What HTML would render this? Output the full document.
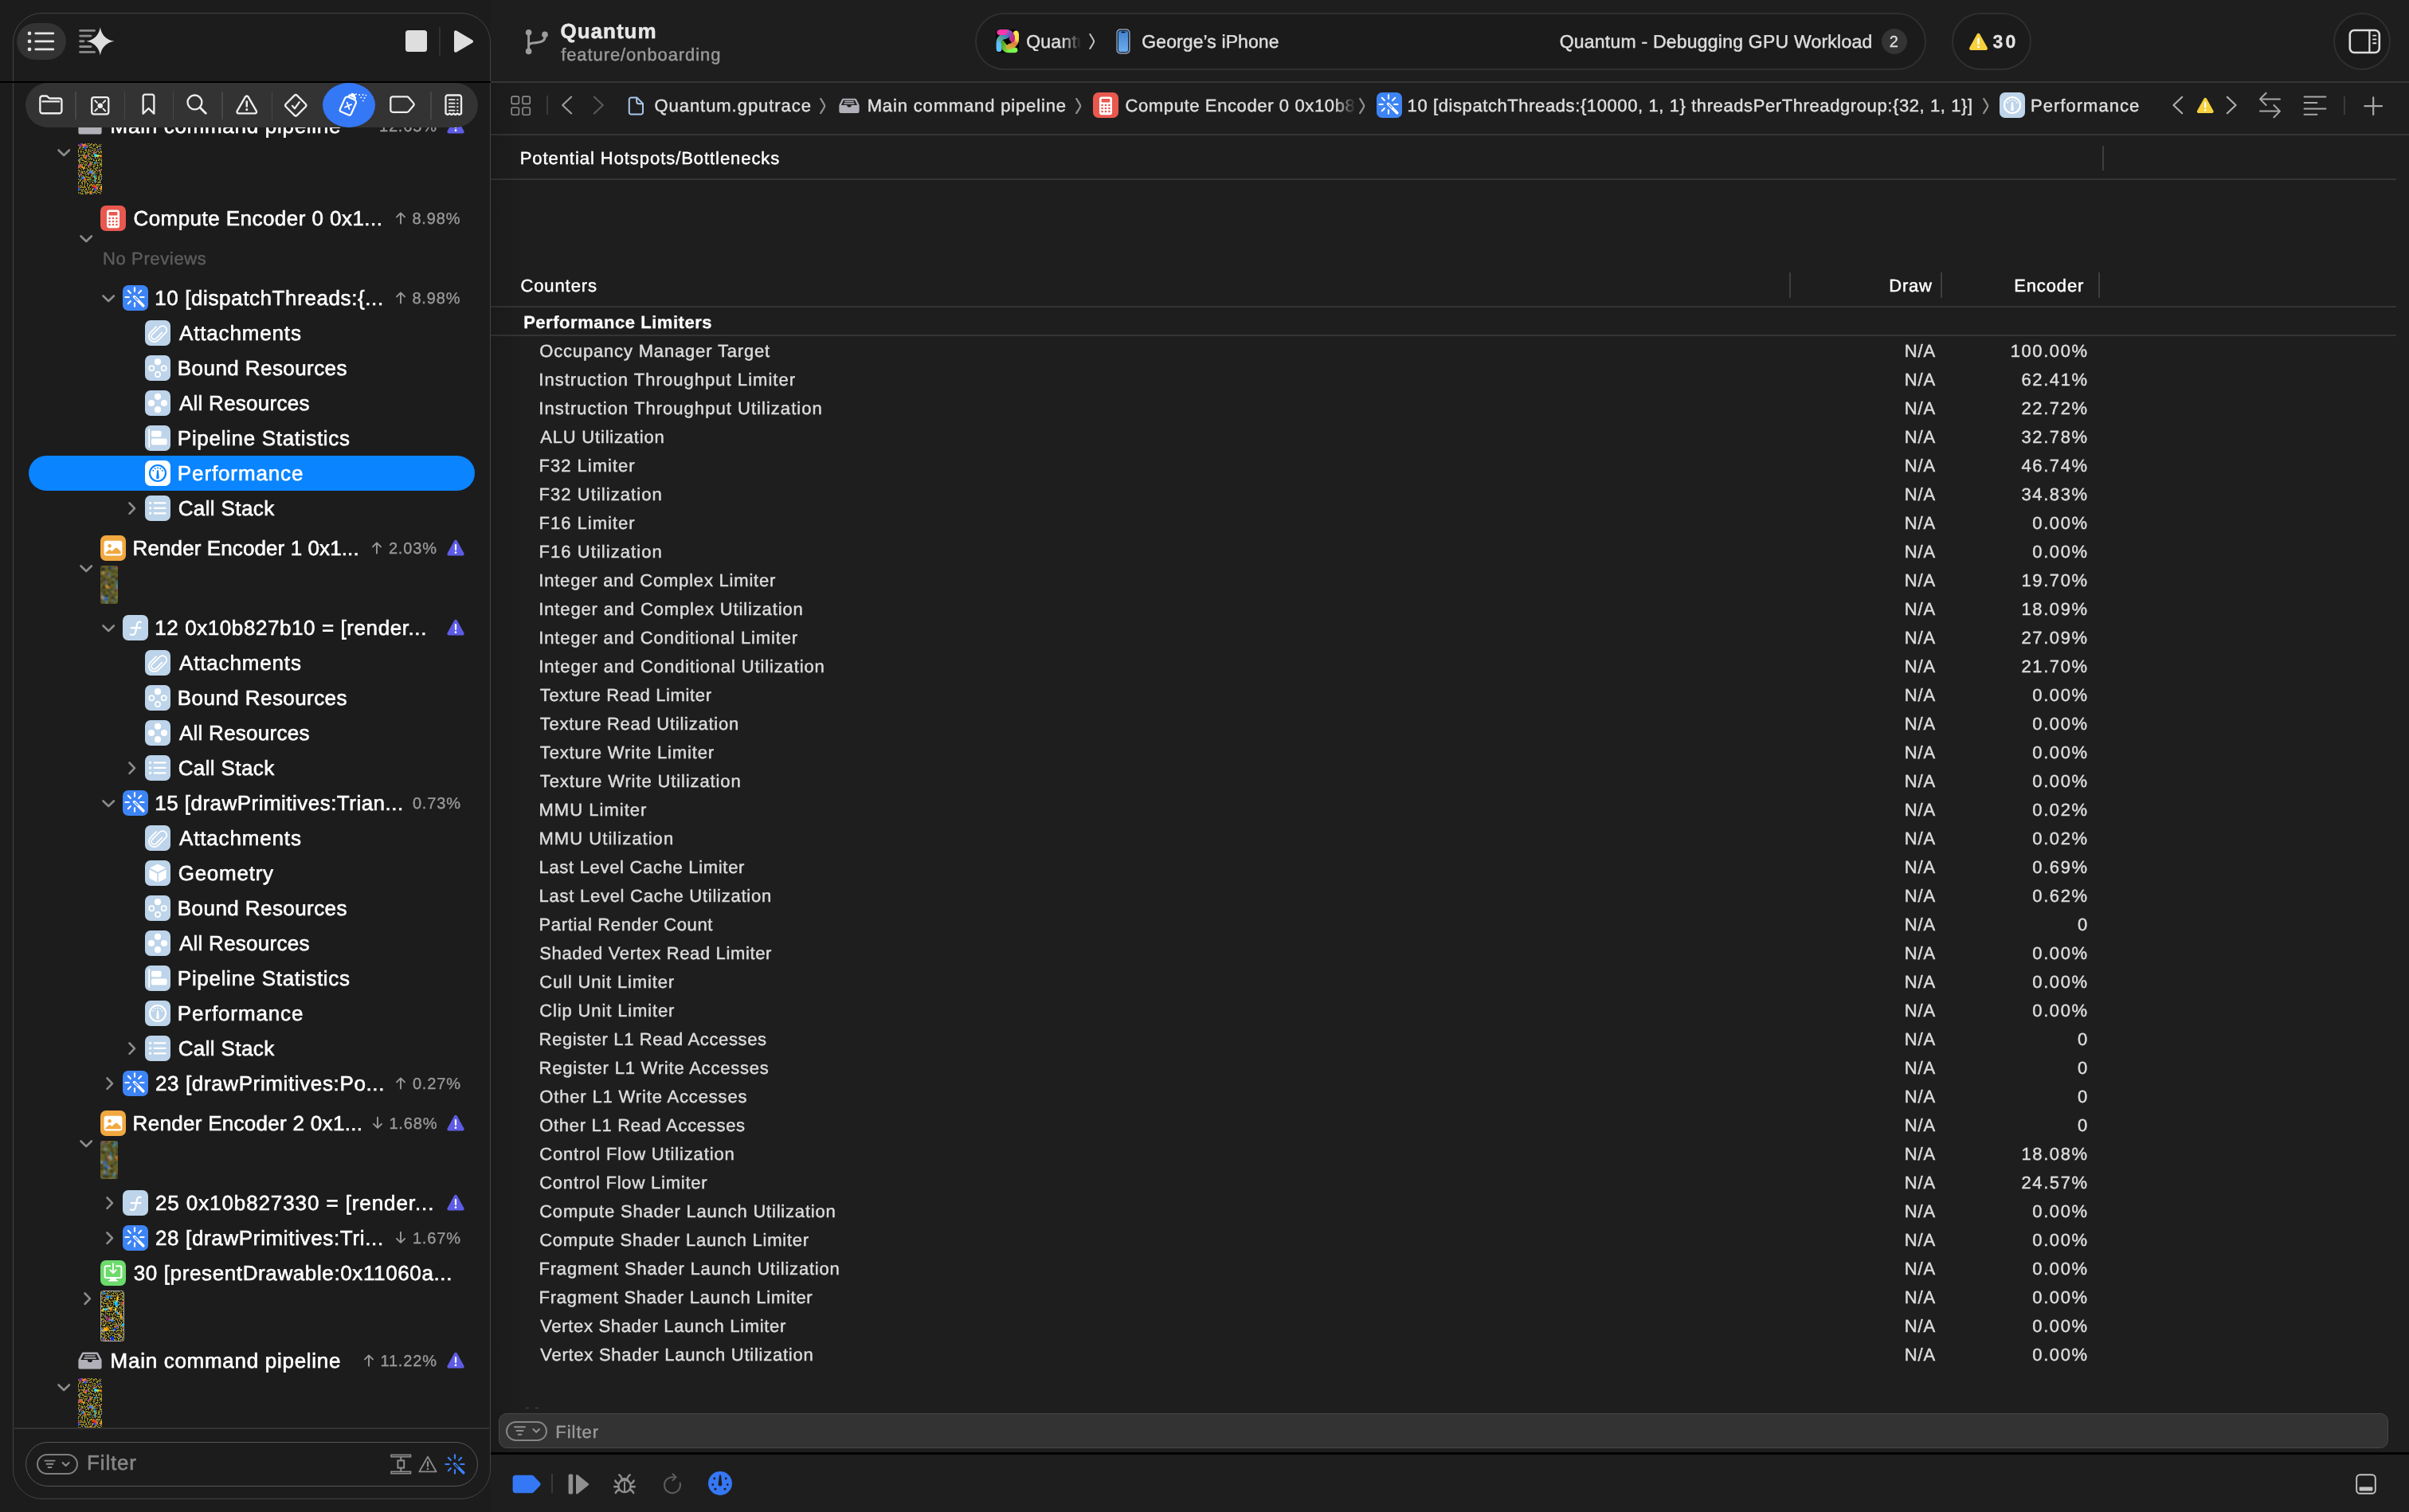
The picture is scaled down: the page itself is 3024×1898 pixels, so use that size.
<!DOCTYPE html>
<html lang="en"><head><meta charset="utf-8"><title>Quantum — Debugging GPU Workload</title>
<style>
html,body{margin:0;padding:0;background:#1e1e1e;overflow:hidden}
body{width:3024px;height:1898px;position:relative;font-family:"Liberation Sans",sans-serif;-webkit-font-smoothing:antialiased;text-rendering:geometricPrecision}
.t{position:absolute;white-space:pre;margin:0;filter:grayscale(1)}
.i{position:absolute;display:block;overflow:visible}
.b{position:absolute;box-sizing:border-box}

</style></head>
<body>
<div class="b" style="left:616px;top:102px;width:2408px;height:2px;background:#353535"></div>
<div class="b" style="left:616px;top:168px;width:2408px;height:2px;background:#353535"></div>
<div class="b" style="left:616px;top:224px;width:2392px;height:2px;background:#353535"></div>
<div class="b" style="left:616px;top:384px;width:2392px;height:2px;background:#353535"></div>
<div class="b" style="left:616px;top:420px;width:2392px;height:2px;background:#353535"></div>
<div class="b" style="left:616px;top:1823px;width:2408px;height:3px;background:#000"></div>
<div class="b" style="left:616px;top:104px;width:44px;height:1719px;background:linear-gradient(90deg,rgba(0,0,0,0.13),rgba(0,0,0,0))"></div>
<div class="b" style="left:0px;top:0px;width:616px;height:1898px;background:#1c1c1c"></div>
<div class="b" style="left:16px;top:16px;width:600px;height:1866px;background:#1c1c1c;border:1.6px solid #434343;border-radius:37px"></div>
<div class="b" style="left:0px;top:102px;width:616px;height:1.7px;background:#000"></div>
<div class="b" style="left:18px;top:104px;width:597px;height:1690px;overflow:hidden">
<svg class="i" style="left:80px;top:43px;" width="30" height="22" viewBox="0 0 30 22"><path d="M6.6 0.6 H23.4 a2.4 2.4 0 0 1 2.1 1.3 L29.6 10 V19 a2.6 2.6 0 0 1 -2.6 2.6 H3 a2.6 2.6 0 0 1 -2.6 -2.6 V10 L4.5 1.9 a2.4 2.4 0 0 1 2.1 -1.3 Z" fill="#b1b0b8"/><path d="M6.9 3 H23.1 L26.6 10 H3.4 Z" fill="#1c1c1c"/><rect x="8.2" y="4.2" width="13.6" height="1.6" rx="0.5" fill="#b1b0b8"/><rect x="7.2" y="7" width="15.6" height="1.8" rx="0.5" fill="#b1b0b8"/><path d="M2.6 10 H11.6 a3.4 3.4 0 0 0 6.8 0 H27.4 V11 H2.6 Z" fill="#b1b0b8"/><path d="M11.9 10 h6.2 a3.1 3.1 0 0 1 -6.2 0 Z" fill="#1c1c1c"/></svg>
<span class="t " style="top:41px;font-size:26px;line-height:26px;color:#ffffff;letter-spacing:0.711px;-webkit-text-stroke:0.6px #ffffff;left:120.62px;">Main command pipeline</span>
<span class="t" style="left:457.92px;top:45px;font-size:20px;line-height:20px;color:#999999;letter-spacing:0.85px;-webkit-text-stroke:0.35px #999999">12.65%</span>
<svg class="i" style="left:543px;top:43.4px;" width="22" height="21" viewBox="0 0 22 21"><path d="M11 0.8 a2 2 0 0 1 1.75 1 L21.4 17.4 a2 2 0 0 1 -1.75 3 H2.35 a2 2 0 0 1 -1.75 -3 L9.25 1.8 a2 2 0 0 1 1.75 -1 Z" fill="#5e5ce6"/><rect x="9.9" y="6" width="2.2" height="8" rx="1.1" fill="#fff"/><circle cx="11" cy="16.7" r="1.35" fill="#fff"/></svg>
<svg class="i" style="left:53.75px;top:82.75px;" width="16.4" height="9.5" viewBox="0 0 16.4 9.5"><path d="M1.5 1.5 L8.2 8 L14.9 1.5" fill="none" stroke="#8c8c8c" stroke-width="2.6" stroke-linecap="round" stroke-linejoin="round"/></svg>
<svg class="i" style="left:80px;top:76px;border-radius:3px;overflow:hidden" width="30" height="64" viewBox="0 0 30 64"><defs><filter id="nz3" x="0" y="0" width="100%" height="100%" color-interpolation-filters="sRGB"><feTurbulence type="fractalNoise" baseFrequency="0.62" numOctaves="1" seed="3" result="n1"/><feColorMatrix in="n1" type="matrix" values="0 0 0 0 0.67  0 0 0 0 0.63  0 0 0 0 0.18  6 0 0 0 -2.6" result="yel"/><feTurbulence type="fractalNoise" baseFrequency="0.17 0.15" numOctaves="2" seed="8" result="n2"/><feColorMatrix in="n2" type="matrix" values="0 3.4 0 0 -1.25  0 0 1.4 0 -0.2  0 -3.4 0 0 2.35  18 0 0 0 -10.4" result="blob"/><feMerge result="m"><feMergeNode in="yel"/><feMergeNode in="blob"/></feMerge><feGaussianBlur in="m" stdDeviation="0.5"/></filter></defs><rect width="30" height="64" fill="#0d0c17"/><rect width="30" height="64" filter="url(#nz3)"/></svg>
<svg class="i" style="left:108px;top:154px;" width="32" height="32" viewBox="0 0 32 32"><rect x="0" y="0" width="32" height="32" rx="7" fill="#e9584f"/><rect x="8" y="5.4" width="16" height="22.8" rx="3" fill="#fff"/><rect x="10.6" y="8" width="10.8" height="4.4" rx="1" fill="#e9584f"/><circle cx="11.6" cy="16" r="1.35" fill="#e9584f"/><circle cx="16" cy="16" r="1.35" fill="#e9584f"/><circle cx="20.4" cy="16" r="1.35" fill="#e9584f"/><circle cx="11.6" cy="20" r="1.35" fill="#e9584f"/><circle cx="16" cy="20" r="1.35" fill="#e9584f"/><circle cx="20.4" cy="20" r="1.35" fill="#e9584f"/><circle cx="11.6" cy="24" r="1.35" fill="#e9584f"/><circle cx="16" cy="24" r="1.35" fill="#e9584f"/><circle cx="20.4" cy="24" r="1.35" fill="#e9584f"/></svg>
<span class="t " style="top:157px;font-size:26px;line-height:26px;color:#ffffff;letter-spacing:0.452px;-webkit-text-stroke:0.6px #ffffff;left:149.43px;">Compute Encoder 0 0x1...</span>
<span class="t" style="left:499.39px;top:161px;font-size:20px;line-height:20px;color:#999999;letter-spacing:0.85px;-webkit-text-stroke:0.35px #999999">8.98%</span>
<svg class="i" style="left:478.99px;top:161.6px;" width="12" height="15" viewBox="0 0 12 15"><path d="M6 14.6 V1.4 M1 6.4 L6 1.4 L11 6.4" fill="none" stroke="#999999" stroke-width="1.9" stroke-linecap="round" stroke-linejoin="round"/></svg>
<svg class="i" style="left:82px;top:191px;" width="16.4" height="9.5" viewBox="0 0 16.4 9.5"><path d="M1.5 1.5 L8.2 8 L14.9 1.5" fill="none" stroke="#8c8c8c" stroke-width="2.6" stroke-linecap="round" stroke-linejoin="round"/></svg>
<span class="t " style="top:210px;font-size:22px;line-height:22px;color:#5c5c5c;letter-spacing:0.637px;-webkit-text-stroke:0.45px #5c5c5c;left:110.95px;">No Previews</span>
<svg class="i" style="left:110px;top:266px;" width="16.4" height="9.5" viewBox="0 0 16.4 9.5"><path d="M1.5 1.5 L8.2 8 L14.9 1.5" fill="none" stroke="#8c8c8c" stroke-width="2.6" stroke-linecap="round" stroke-linejoin="round"/></svg>
<svg class="i" style="left:136px;top:254px;" width="32" height="32" viewBox="0 0 32 32"><rect x="0" y="0" width="32" height="32" rx="7" fill="#3d84f5"/><g stroke="#fff" stroke-width="2.1" stroke-linecap="round"><path d="M15.00 7.80 L15.00 3.40"/><path d="M20.09 9.91 L23.20 6.80"/><path d="M22.20 15.00 L26.60 15.00"/><path d="M15.00 22.20 L15.00 26.60"/><path d="M9.91 20.09 L6.80 23.20"/><path d="M7.80 15.00 L3.40 15.00"/><path d="M9.91 9.91 L6.80 6.80"/></g><path d="M14.6 14.6 L25.8 25.8" stroke="#fff" stroke-width="3.6" stroke-linecap="round"/><path d="M15.4 15.4 L19 19" stroke="#3d84f5" stroke-width="1.1" stroke-linecap="round"/></svg>
<span class="t " style="top:257px;font-size:26px;line-height:26px;color:#ffffff;letter-spacing:0.596px;-webkit-text-stroke:0.6px #ffffff;left:176.27px;">10 [dispatchThreads:{...</span>
<span class="t" style="left:499.39px;top:261px;font-size:20px;line-height:20px;color:#999999;letter-spacing:0.85px;-webkit-text-stroke:0.35px #999999">8.98%</span>
<svg class="i" style="left:478.99px;top:261.6px;" width="12" height="15" viewBox="0 0 12 15"><path d="M6 14.6 V1.4 M1 6.4 L6 1.4 L11 6.4" fill="none" stroke="#999999" stroke-width="1.9" stroke-linecap="round" stroke-linejoin="round"/></svg>
<svg class="i" style="left:164px;top:298px;" width="32" height="32" viewBox="0 0 32 32"><rect x="0" y="0" width="32" height="32" rx="7" fill="#bdd4ea"/><g transform="rotate(45 16 16)" fill="none" stroke="#fff" stroke-width="1.8" stroke-linecap="round"><path d="M19.6 11.5 V22.2 a3.6 3.6 0 0 1 -7.2 0 V8.8 a5.3 5.3 0 0 1 10.6 0 V22 a7 7 0 0 1 -14 0 V11.5" transform="translate(0.3 0.5) scale(0.98)"/></g></svg>
<span class="t " style="top:301px;font-size:26px;line-height:26px;color:#ffffff;letter-spacing:0.849px;-webkit-text-stroke:0.6px #ffffff;left:206.95px;">Attachments</span>
<svg class="i" style="left:164px;top:342px;" width="32" height="32" viewBox="0 0 32 32"><rect x="0" y="0" width="32" height="32" rx="7" fill="#bdd4ea"/><circle cx="16" cy="8.2" r="4.1" fill="#fff"/><g fill="none" stroke="#fff" stroke-width="1.7"><circle cx="8.3" cy="16.3" r="3.1"/><circle cx="23.7" cy="16.3" r="3.1"/><circle cx="16" cy="24" r="3.1"/></g></svg>
<span class="t " style="top:345px;font-size:26px;line-height:26px;color:#ffffff;letter-spacing:0.422px;-webkit-text-stroke:0.6px #ffffff;left:204.87px;">Bound Resources</span>
<svg class="i" style="left:164px;top:386px;" width="32" height="32" viewBox="0 0 32 32"><rect x="0" y="0" width="32" height="32" rx="7" fill="#bdd4ea"/><g fill="#fff"><circle cx="16" cy="7.8" r="4.1"/><circle cx="8" cy="16" r="4.1"/><circle cx="24" cy="16" r="4.1"/><circle cx="16" cy="24.2" r="4.1"/></g></svg>
<span class="t " style="top:389px;font-size:26px;line-height:26px;color:#ffffff;letter-spacing:0.259px;-webkit-text-stroke:0.6px #ffffff;left:206.95px;">All Resources</span>
<svg class="i" style="left:164px;top:430px;" width="32" height="32" viewBox="0 0 32 32"><rect x="0" y="0" width="32" height="32" rx="7" fill="#bdd4ea"/><rect x="4.4" y="4" width="1.7" height="24" rx="0.8" fill="#fff"/><rect x="8" y="6.8" width="12.6" height="7.6" rx="2" fill="#fff"/><rect x="8" y="16.6" width="19.6" height="7.8" rx="2" fill="#fff"/></svg>
<span class="t " style="top:433px;font-size:26px;line-height:26px;color:#ffffff;letter-spacing:0.684px;-webkit-text-stroke:0.6px #ffffff;left:204.87px;">Pipeline Statistics</span>
<div class="b" style="left:18px;top:468px;width:560px;height:44px;border-radius:22px;background:#0a84ff"></div>
<svg class="i" style="left:164px;top:474px;" width="32" height="32" viewBox="0 0 32 32"><rect x="0" y="0" width="32" height="32" rx="7" fill="#fff"/><circle cx="16" cy="16" r="10" fill="none" stroke="#0a84ff" stroke-width="2.2"/><circle cx="10.28" cy="12.70" r="0.95" fill="#0a84ff"/><circle cx="12.70" cy="10.28" r="0.95" fill="#0a84ff"/><circle cx="16.00" cy="9.40" r="0.95" fill="#0a84ff"/><circle cx="19.30" cy="10.28" r="0.95" fill="#0a84ff"/><circle cx="21.72" cy="12.70" r="0.95" fill="#0a84ff"/><path d="M15.1 12.2 h1.8 l0.9 9.2 a1.8 1.8 0 0 1 -3.6 0 z" fill="#0a84ff"/></svg>
<span class="t " style="top:477px;font-size:26px;line-height:26px;color:#ffffff;letter-spacing:0.871px;-webkit-text-stroke:0.6px #ffffff;left:204.87px;">Performance</span>
<svg class="i" style="left:143.25px;top:525.8px;" width="9.5" height="16.4" viewBox="0 0 9.5 16.4"><path d="M1.5 1.5 L8 8.2 L1.5 14.9" fill="none" stroke="#8c8c8c" stroke-width="2.6" stroke-linecap="round" stroke-linejoin="round"/></svg>
<svg class="i" style="left:164px;top:518px;" width="32" height="32" viewBox="0 0 32 32"><rect x="0" y="0" width="32" height="32" rx="7" fill="#bdd4ea"/><circle cx="6.6" cy="9.3" r="1.6" fill="#fff"/><rect x="10.6" y="8.200000000000001" width="16.2" height="2.2" rx="1.1" fill="#fff"/><circle cx="6.6" cy="15.8" r="1.6" fill="#fff"/><rect x="10.6" y="14.700000000000001" width="16.2" height="2.2" rx="1.1" fill="#fff"/><circle cx="6.6" cy="22.3" r="1.6" fill="#fff"/><rect x="10.6" y="21.2" width="16.2" height="2.2" rx="1.1" fill="#fff"/></svg>
<span class="t " style="top:521px;font-size:26px;line-height:26px;color:#ffffff;letter-spacing:0.388px;-webkit-text-stroke:0.6px #ffffff;left:205.68px;">Call Stack</span>
<svg class="i" style="left:108px;top:568px;" width="32" height="32" viewBox="0 0 32 32"><rect x="0" y="0" width="32" height="32" rx="7" fill="#f1a840"/><rect x="4.6" y="6.8" width="22.8" height="18.6" rx="3.2" fill="#fff"/><circle cx="11.6" cy="13.2" r="2.2" fill="#f1a840"/><path d="M6.4 23.3 v-1.2 l4.2 -3.6 q1 -0.8 2 0 l1.9 1.6 l4.2 -4.2 q1.2 -1 2.4 0 l4.5 4.4 v3 z" fill="#f1a840"/></svg>
<span class="t " style="top:571px;font-size:26px;line-height:26px;color:#ffffff;letter-spacing:0.100px;-webkit-text-stroke:0.6px #ffffff;left:148.62px;">Render Encoder 1 0x1...</span>
<span class="t" style="left:469.89px;top:575px;font-size:20px;line-height:20px;color:#999999;letter-spacing:0.85px;-webkit-text-stroke:0.35px #999999">2.03%</span>
<svg class="i" style="left:449.49px;top:575.6px;" width="12" height="15" viewBox="0 0 12 15"><path d="M6 14.6 V1.4 M1 6.4 L6 1.4 L11 6.4" fill="none" stroke="#999999" stroke-width="1.9" stroke-linecap="round" stroke-linejoin="round"/></svg>
<svg class="i" style="left:543px;top:573.4px;" width="22" height="21" viewBox="0 0 22 21"><path d="M11 0.8 a2 2 0 0 1 1.75 1 L21.4 17.4 a2 2 0 0 1 -1.75 3 H2.35 a2 2 0 0 1 -1.75 -3 L9.25 1.8 a2 2 0 0 1 1.75 -1 Z" fill="#5e5ce6"/><rect x="9.9" y="6" width="2.2" height="8" rx="1.1" fill="#fff"/><circle cx="11" cy="16.7" r="1.35" fill="#fff"/></svg>
<svg class="i" style="left:82px;top:605.25px;" width="16.4" height="9.5" viewBox="0 0 16.4 9.5"><path d="M1.5 1.5 L8.2 8 L14.9 1.5" fill="none" stroke="#8c8c8c" stroke-width="2.6" stroke-linecap="round" stroke-linejoin="round"/></svg>
<svg class="i" style="left:108px;top:606px;border-radius:3px;overflow:hidden" width="22" height="48" viewBox="0 0 22 48"><defs><filter id="nz11" x="0" y="0" width="100%" height="100%" color-interpolation-filters="sRGB"><feTurbulence type="fractalNoise" baseFrequency="0.3" numOctaves="2" seed="11" result="n1"/><feColorMatrix in="n1" type="matrix" values="0 0 0 0 0.06  0 0 0 0 0.05  0 0 0 0 0.08  5.5 0 0 0 -2.9" result="dark"/><feTurbulence type="fractalNoise" baseFrequency="0.2 0.16" numOctaves="2" seed="16" result="n2"/><feColorMatrix in="n2" type="matrix" values="0 3.2 0 0 -1.1  0 0 1.2 0 -0.1  0 -3 0 0 2.1  15 0 0 0 -8.8" result="blob"/><feMerge result="m"><feMergeNode in="dark"/><feMergeNode in="blob"/></feMerge><feGaussianBlur in="m" stdDeviation="0.8"/></filter></defs><rect width="22" height="48" fill="#67642a"/><rect width="22" height="48" filter="url(#nz11)"/></svg>
<svg class="i" style="left:110px;top:680px;" width="16.4" height="9.5" viewBox="0 0 16.4 9.5"><path d="M1.5 1.5 L8.2 8 L14.9 1.5" fill="none" stroke="#8c8c8c" stroke-width="2.6" stroke-linecap="round" stroke-linejoin="round"/></svg>
<svg class="i" style="left:136px;top:668px;" width="32" height="32" viewBox="0 0 32 32"><rect x="0" y="0" width="32" height="32" rx="7" fill="#bdd4ea"/><g fill="none" stroke="#fff" stroke-width="2.2" stroke-linecap="round" stroke-linejoin="round"><path d="M22.7 9 C20.6 8.1 18.5 8.8 17.9 12 L16.2 21 C15.6 24.4 13.2 25.6 9.8 24.5"/><path d="M10.6 16.1 H22.6"/></g></svg>
<span class="t " style="top:671px;font-size:26px;line-height:26px;color:#ffffff;letter-spacing:0.582px;-webkit-text-stroke:0.6px #ffffff;left:176.27px;">12 0x10b827b10 = [render...</span>
<svg class="i" style="left:543px;top:673.4px;" width="22" height="21" viewBox="0 0 22 21"><path d="M11 0.8 a2 2 0 0 1 1.75 1 L21.4 17.4 a2 2 0 0 1 -1.75 3 H2.35 a2 2 0 0 1 -1.75 -3 L9.25 1.8 a2 2 0 0 1 1.75 -1 Z" fill="#5e5ce6"/><rect x="9.9" y="6" width="2.2" height="8" rx="1.1" fill="#fff"/><circle cx="11" cy="16.7" r="1.35" fill="#fff"/></svg>
<svg class="i" style="left:164px;top:712px;" width="32" height="32" viewBox="0 0 32 32"><rect x="0" y="0" width="32" height="32" rx="7" fill="#bdd4ea"/><g transform="rotate(45 16 16)" fill="none" stroke="#fff" stroke-width="1.8" stroke-linecap="round"><path d="M19.6 11.5 V22.2 a3.6 3.6 0 0 1 -7.2 0 V8.8 a5.3 5.3 0 0 1 10.6 0 V22 a7 7 0 0 1 -14 0 V11.5" transform="translate(0.3 0.5) scale(0.98)"/></g></svg>
<span class="t " style="top:715px;font-size:26px;line-height:26px;color:#ffffff;letter-spacing:0.849px;-webkit-text-stroke:0.6px #ffffff;left:206.95px;">Attachments</span>
<svg class="i" style="left:164px;top:756px;" width="32" height="32" viewBox="0 0 32 32"><rect x="0" y="0" width="32" height="32" rx="7" fill="#bdd4ea"/><circle cx="16" cy="8.2" r="4.1" fill="#fff"/><g fill="none" stroke="#fff" stroke-width="1.7"><circle cx="8.3" cy="16.3" r="3.1"/><circle cx="23.7" cy="16.3" r="3.1"/><circle cx="16" cy="24" r="3.1"/></g></svg>
<span class="t " style="top:759px;font-size:26px;line-height:26px;color:#ffffff;letter-spacing:0.422px;-webkit-text-stroke:0.6px #ffffff;left:204.87px;">Bound Resources</span>
<svg class="i" style="left:164px;top:800px;" width="32" height="32" viewBox="0 0 32 32"><rect x="0" y="0" width="32" height="32" rx="7" fill="#bdd4ea"/><g fill="#fff"><circle cx="16" cy="7.8" r="4.1"/><circle cx="8" cy="16" r="4.1"/><circle cx="24" cy="16" r="4.1"/><circle cx="16" cy="24.2" r="4.1"/></g></svg>
<span class="t " style="top:803px;font-size:26px;line-height:26px;color:#ffffff;letter-spacing:0.259px;-webkit-text-stroke:0.6px #ffffff;left:206.95px;">All Resources</span>
<svg class="i" style="left:143.25px;top:851.8px;" width="9.5" height="16.4" viewBox="0 0 9.5 16.4"><path d="M1.5 1.5 L8 8.2 L1.5 14.9" fill="none" stroke="#8c8c8c" stroke-width="2.6" stroke-linecap="round" stroke-linejoin="round"/></svg>
<svg class="i" style="left:164px;top:844px;" width="32" height="32" viewBox="0 0 32 32"><rect x="0" y="0" width="32" height="32" rx="7" fill="#bdd4ea"/><circle cx="6.6" cy="9.3" r="1.6" fill="#fff"/><rect x="10.6" y="8.200000000000001" width="16.2" height="2.2" rx="1.1" fill="#fff"/><circle cx="6.6" cy="15.8" r="1.6" fill="#fff"/><rect x="10.6" y="14.700000000000001" width="16.2" height="2.2" rx="1.1" fill="#fff"/><circle cx="6.6" cy="22.3" r="1.6" fill="#fff"/><rect x="10.6" y="21.2" width="16.2" height="2.2" rx="1.1" fill="#fff"/></svg>
<span class="t " style="top:847px;font-size:26px;line-height:26px;color:#ffffff;letter-spacing:0.388px;-webkit-text-stroke:0.6px #ffffff;left:205.68px;">Call Stack</span>
<svg class="i" style="left:110px;top:900px;" width="16.4" height="9.5" viewBox="0 0 16.4 9.5"><path d="M1.5 1.5 L8.2 8 L14.9 1.5" fill="none" stroke="#8c8c8c" stroke-width="2.6" stroke-linecap="round" stroke-linejoin="round"/></svg>
<svg class="i" style="left:136px;top:888px;" width="32" height="32" viewBox="0 0 32 32"><rect x="0" y="0" width="32" height="32" rx="7" fill="#3d84f5"/><g stroke="#fff" stroke-width="2.1" stroke-linecap="round"><path d="M15.00 7.80 L15.00 3.40"/><path d="M20.09 9.91 L23.20 6.80"/><path d="M22.20 15.00 L26.60 15.00"/><path d="M15.00 22.20 L15.00 26.60"/><path d="M9.91 20.09 L6.80 23.20"/><path d="M7.80 15.00 L3.40 15.00"/><path d="M9.91 9.91 L6.80 6.80"/></g><path d="M14.6 14.6 L25.8 25.8" stroke="#fff" stroke-width="3.6" stroke-linecap="round"/><path d="M15.4 15.4 L19 19" stroke="#3d84f5" stroke-width="1.1" stroke-linecap="round"/></svg>
<span class="t " style="top:891px;font-size:26px;line-height:26px;color:#ffffff;letter-spacing:0.473px;-webkit-text-stroke:0.6px #ffffff;left:176.27px;">15 [drawPrimitives:Trian...</span>
<span class="t" style="left:499.89px;top:895px;font-size:20px;line-height:20px;color:#999999;letter-spacing:0.85px;-webkit-text-stroke:0.35px #999999">0.73%</span>
<svg class="i" style="left:164px;top:932px;" width="32" height="32" viewBox="0 0 32 32"><rect x="0" y="0" width="32" height="32" rx="7" fill="#bdd4ea"/><g transform="rotate(45 16 16)" fill="none" stroke="#fff" stroke-width="1.8" stroke-linecap="round"><path d="M19.6 11.5 V22.2 a3.6 3.6 0 0 1 -7.2 0 V8.8 a5.3 5.3 0 0 1 10.6 0 V22 a7 7 0 0 1 -14 0 V11.5" transform="translate(0.3 0.5) scale(0.98)"/></g></svg>
<span class="t " style="top:935px;font-size:26px;line-height:26px;color:#ffffff;letter-spacing:0.849px;-webkit-text-stroke:0.6px #ffffff;left:206.95px;">Attachments</span>
<svg class="i" style="left:164px;top:976px;" width="32" height="32" viewBox="0 0 32 32"><rect x="0" y="0" width="32" height="32" rx="7" fill="#bdd4ea"/><path d="M16 4.6 L26 9.6 L16 14.8 L6 9.6 Z" fill="#fff"/><path d="M5.4 11.4 L15.2 16.4 V27.6 L6.4 23 a2 2 0 0 1 -1 -1.7 Z" fill="#fff"/><path d="M26.6 11.4 L16.8 16.4 V27.6 L25.6 23 a2 2 0 0 0 1 -1.7 Z" fill="#fff"/></svg>
<span class="t " style="top:979px;font-size:26px;line-height:26px;color:#ffffff;letter-spacing:0.746px;-webkit-text-stroke:0.6px #ffffff;left:205.69px;">Geometry</span>
<svg class="i" style="left:164px;top:1020px;" width="32" height="32" viewBox="0 0 32 32"><rect x="0" y="0" width="32" height="32" rx="7" fill="#bdd4ea"/><circle cx="16" cy="8.2" r="4.1" fill="#fff"/><g fill="none" stroke="#fff" stroke-width="1.7"><circle cx="8.3" cy="16.3" r="3.1"/><circle cx="23.7" cy="16.3" r="3.1"/><circle cx="16" cy="24" r="3.1"/></g></svg>
<span class="t " style="top:1023px;font-size:26px;line-height:26px;color:#ffffff;letter-spacing:0.422px;-webkit-text-stroke:0.6px #ffffff;left:204.87px;">Bound Resources</span>
<svg class="i" style="left:164px;top:1064px;" width="32" height="32" viewBox="0 0 32 32"><rect x="0" y="0" width="32" height="32" rx="7" fill="#bdd4ea"/><g fill="#fff"><circle cx="16" cy="7.8" r="4.1"/><circle cx="8" cy="16" r="4.1"/><circle cx="24" cy="16" r="4.1"/><circle cx="16" cy="24.2" r="4.1"/></g></svg>
<span class="t " style="top:1067px;font-size:26px;line-height:26px;color:#ffffff;letter-spacing:0.259px;-webkit-text-stroke:0.6px #ffffff;left:206.95px;">All Resources</span>
<svg class="i" style="left:164px;top:1108px;" width="32" height="32" viewBox="0 0 32 32"><rect x="0" y="0" width="32" height="32" rx="7" fill="#bdd4ea"/><rect x="4.4" y="4" width="1.7" height="24" rx="0.8" fill="#fff"/><rect x="8" y="6.8" width="12.6" height="7.6" rx="2" fill="#fff"/><rect x="8" y="16.6" width="19.6" height="7.8" rx="2" fill="#fff"/></svg>
<span class="t " style="top:1111px;font-size:26px;line-height:26px;color:#ffffff;letter-spacing:0.684px;-webkit-text-stroke:0.6px #ffffff;left:204.87px;">Pipeline Statistics</span>
<svg class="i" style="left:164px;top:1152px;" width="32" height="32" viewBox="0 0 32 32"><rect x="0" y="0" width="32" height="32" rx="7" fill="#bdd4ea"/><circle cx="16" cy="16" r="10" fill="none" stroke="#fff" stroke-width="2.2"/><circle cx="10.28" cy="12.70" r="0.95" fill="#fff"/><circle cx="12.70" cy="10.28" r="0.95" fill="#fff"/><circle cx="16.00" cy="9.40" r="0.95" fill="#fff"/><circle cx="19.30" cy="10.28" r="0.95" fill="#fff"/><circle cx="21.72" cy="12.70" r="0.95" fill="#fff"/><path d="M15.1 12.2 h1.8 l0.9 9.2 a1.8 1.8 0 0 1 -3.6 0 z" fill="#fff"/></svg>
<span class="t " style="top:1155px;font-size:26px;line-height:26px;color:#ffffff;letter-spacing:0.871px;-webkit-text-stroke:0.6px #ffffff;left:204.87px;">Performance</span>
<svg class="i" style="left:143.25px;top:1203.8px;" width="9.5" height="16.4" viewBox="0 0 9.5 16.4"><path d="M1.5 1.5 L8 8.2 L1.5 14.9" fill="none" stroke="#8c8c8c" stroke-width="2.6" stroke-linecap="round" stroke-linejoin="round"/></svg>
<svg class="i" style="left:164px;top:1196px;" width="32" height="32" viewBox="0 0 32 32"><rect x="0" y="0" width="32" height="32" rx="7" fill="#bdd4ea"/><circle cx="6.6" cy="9.3" r="1.6" fill="#fff"/><rect x="10.6" y="8.200000000000001" width="16.2" height="2.2" rx="1.1" fill="#fff"/><circle cx="6.6" cy="15.8" r="1.6" fill="#fff"/><rect x="10.6" y="14.700000000000001" width="16.2" height="2.2" rx="1.1" fill="#fff"/><circle cx="6.6" cy="22.3" r="1.6" fill="#fff"/><rect x="10.6" y="21.2" width="16.2" height="2.2" rx="1.1" fill="#fff"/></svg>
<span class="t " style="top:1199px;font-size:26px;line-height:26px;color:#ffffff;letter-spacing:0.388px;-webkit-text-stroke:0.6px #ffffff;left:205.68px;">Call Stack</span>
<svg class="i" style="left:115px;top:1247.8px;" width="9.5" height="16.4" viewBox="0 0 9.5 16.4"><path d="M1.5 1.5 L8 8.2 L1.5 14.9" fill="none" stroke="#8c8c8c" stroke-width="2.6" stroke-linecap="round" stroke-linejoin="round"/></svg>
<svg class="i" style="left:136px;top:1240px;" width="32" height="32" viewBox="0 0 32 32"><rect x="0" y="0" width="32" height="32" rx="7" fill="#3d84f5"/><g stroke="#fff" stroke-width="2.1" stroke-linecap="round"><path d="M15.00 7.80 L15.00 3.40"/><path d="M20.09 9.91 L23.20 6.80"/><path d="M22.20 15.00 L26.60 15.00"/><path d="M15.00 22.20 L15.00 26.60"/><path d="M9.91 20.09 L6.80 23.20"/><path d="M7.80 15.00 L3.40 15.00"/><path d="M9.91 9.91 L6.80 6.80"/></g><path d="M14.6 14.6 L25.8 25.8" stroke="#fff" stroke-width="3.6" stroke-linecap="round"/><path d="M15.4 15.4 L19 19" stroke="#3d84f5" stroke-width="1.1" stroke-linecap="round"/></svg>
<span class="t " style="top:1243px;font-size:26px;line-height:26px;color:#ffffff;letter-spacing:0.624px;-webkit-text-stroke:0.6px #ffffff;left:176.94px;">23 [drawPrimitives:Po...</span>
<span class="t" style="left:499.89px;top:1247px;font-size:20px;line-height:20px;color:#999999;letter-spacing:0.85px;-webkit-text-stroke:0.35px #999999">0.27%</span>
<svg class="i" style="left:479.49px;top:1247.6px;" width="12" height="15" viewBox="0 0 12 15"><path d="M6 14.6 V1.4 M1 6.4 L6 1.4 L11 6.4" fill="none" stroke="#999999" stroke-width="1.9" stroke-linecap="round" stroke-linejoin="round"/></svg>
<svg class="i" style="left:108px;top:1290px;" width="32" height="32" viewBox="0 0 32 32"><rect x="0" y="0" width="32" height="32" rx="7" fill="#f1a840"/><rect x="4.6" y="6.8" width="22.8" height="18.6" rx="3.2" fill="#fff"/><circle cx="11.6" cy="13.2" r="2.2" fill="#f1a840"/><path d="M6.4 23.3 v-1.2 l4.2 -3.6 q1 -0.8 2 0 l1.9 1.6 l4.2 -4.2 q1.2 -1 2.4 0 l4.5 4.4 v3 z" fill="#f1a840"/></svg>
<span class="t " style="top:1293px;font-size:26px;line-height:26px;color:#ffffff;letter-spacing:0.293px;-webkit-text-stroke:0.6px #ffffff;left:148.62px;">Render Encoder 2 0x1...</span>
<span class="t" style="left:470.39px;top:1297px;font-size:20px;line-height:20px;color:#999999;letter-spacing:0.85px;-webkit-text-stroke:0.35px #999999">1.68%</span>
<svg class="i" style="left:449.99px;top:1297.6px;" width="12" height="15" viewBox="0 0 12 15"><path d="M6 0.6 V13.8 M1 8.8 L6 13.8 L11 8.8" fill="none" stroke="#999999" stroke-width="1.9" stroke-linecap="round" stroke-linejoin="round"/></svg>
<svg class="i" style="left:543px;top:1295.4px;" width="22" height="21" viewBox="0 0 22 21"><path d="M11 0.8 a2 2 0 0 1 1.75 1 L21.4 17.4 a2 2 0 0 1 -1.75 3 H2.35 a2 2 0 0 1 -1.75 -3 L9.25 1.8 a2 2 0 0 1 1.75 -1 Z" fill="#5e5ce6"/><rect x="9.9" y="6" width="2.2" height="8" rx="1.1" fill="#fff"/><circle cx="11" cy="16.7" r="1.35" fill="#fff"/></svg>
<svg class="i" style="left:82px;top:1327px;" width="16.4" height="9.5" viewBox="0 0 16.4 9.5"><path d="M1.5 1.5 L8.2 8 L14.9 1.5" fill="none" stroke="#8c8c8c" stroke-width="2.6" stroke-linecap="round" stroke-linejoin="round"/></svg>
<svg class="i" style="left:108px;top:1328px;border-radius:3px;overflow:hidden" width="22" height="48" viewBox="0 0 22 48"><defs><filter id="nz19" x="0" y="0" width="100%" height="100%" color-interpolation-filters="sRGB"><feTurbulence type="fractalNoise" baseFrequency="0.3" numOctaves="2" seed="19" result="n1"/><feColorMatrix in="n1" type="matrix" values="0 0 0 0 0.06  0 0 0 0 0.05  0 0 0 0 0.08  5.5 0 0 0 -2.9" result="dark"/><feTurbulence type="fractalNoise" baseFrequency="0.2 0.16" numOctaves="2" seed="24" result="n2"/><feColorMatrix in="n2" type="matrix" values="0 3.2 0 0 -1.1  0 0 1.2 0 -0.1  0 -3 0 0 2.1  15 0 0 0 -8.8" result="blob"/><feMerge result="m"><feMergeNode in="dark"/><feMergeNode in="blob"/></feMerge><feGaussianBlur in="m" stdDeviation="0.8"/></filter></defs><rect width="22" height="48" fill="#67642a"/><rect width="22" height="48" filter="url(#nz19)"/></svg>
<svg class="i" style="left:115px;top:1397.8px;" width="9.5" height="16.4" viewBox="0 0 9.5 16.4"><path d="M1.5 1.5 L8 8.2 L1.5 14.9" fill="none" stroke="#8c8c8c" stroke-width="2.6" stroke-linecap="round" stroke-linejoin="round"/></svg>
<svg class="i" style="left:136px;top:1390px;" width="32" height="32" viewBox="0 0 32 32"><rect x="0" y="0" width="32" height="32" rx="7" fill="#bdd4ea"/><g fill="none" stroke="#fff" stroke-width="2.2" stroke-linecap="round" stroke-linejoin="round"><path d="M22.7 9 C20.6 8.1 18.5 8.8 17.9 12 L16.2 21 C15.6 24.4 13.2 25.6 9.8 24.5"/><path d="M10.6 16.1 H22.6"/></g></svg>
<span class="t " style="top:1393px;font-size:26px;line-height:26px;color:#ffffff;letter-spacing:0.903px;-webkit-text-stroke:0.6px #ffffff;left:176.94px;">25 0x10b827330 = [render...</span>
<svg class="i" style="left:543px;top:1395.4px;" width="22" height="21" viewBox="0 0 22 21"><path d="M11 0.8 a2 2 0 0 1 1.75 1 L21.4 17.4 a2 2 0 0 1 -1.75 3 H2.35 a2 2 0 0 1 -1.75 -3 L9.25 1.8 a2 2 0 0 1 1.75 -1 Z" fill="#5e5ce6"/><rect x="9.9" y="6" width="2.2" height="8" rx="1.1" fill="#fff"/><circle cx="11" cy="16.7" r="1.35" fill="#fff"/></svg>
<svg class="i" style="left:115px;top:1441.8px;" width="9.5" height="16.4" viewBox="0 0 9.5 16.4"><path d="M1.5 1.5 L8 8.2 L1.5 14.9" fill="none" stroke="#8c8c8c" stroke-width="2.6" stroke-linecap="round" stroke-linejoin="round"/></svg>
<svg class="i" style="left:136px;top:1434px;" width="32" height="32" viewBox="0 0 32 32"><rect x="0" y="0" width="32" height="32" rx="7" fill="#3d84f5"/><g stroke="#fff" stroke-width="2.1" stroke-linecap="round"><path d="M15.00 7.80 L15.00 3.40"/><path d="M20.09 9.91 L23.20 6.80"/><path d="M22.20 15.00 L26.60 15.00"/><path d="M15.00 22.20 L15.00 26.60"/><path d="M9.91 20.09 L6.80 23.20"/><path d="M7.80 15.00 L3.40 15.00"/><path d="M9.91 9.91 L6.80 6.80"/></g><path d="M14.6 14.6 L25.8 25.8" stroke="#fff" stroke-width="3.6" stroke-linecap="round"/><path d="M15.4 15.4 L19 19" stroke="#3d84f5" stroke-width="1.1" stroke-linecap="round"/></svg>
<span class="t " style="top:1437px;font-size:26px;line-height:26px;color:#ffffff;letter-spacing:0.648px;-webkit-text-stroke:0.6px #ffffff;left:176.94px;">28 [drawPrimitives:Tri...</span>
<span class="t" style="left:499.89px;top:1441px;font-size:20px;line-height:20px;color:#999999;letter-spacing:0.85px;-webkit-text-stroke:0.35px #999999">1.67%</span>
<svg class="i" style="left:479.49px;top:1441.6px;" width="12" height="15" viewBox="0 0 12 15"><path d="M6 0.6 V13.8 M1 8.8 L6 13.8 L11 8.8" fill="none" stroke="#999999" stroke-width="1.9" stroke-linecap="round" stroke-linejoin="round"/></svg>
<svg class="i" style="left:108px;top:1478px;" width="32" height="32" viewBox="0 0 32 32"><rect x="0" y="0" width="32" height="32" rx="7" fill="#6dda6c"/><g fill="none" stroke="#fff" stroke-width="2" stroke-linecap="round" stroke-linejoin="round"><path d="M12 7.2 H7.6 a2 2 0 0 0 -2 2 V20 a2 2 0 0 0 2 2 H24.4 a2 2 0 0 0 2 -2 V9.2 a2 2 0 0 0 -2 -2 H20"/><path d="M16 4.2 V15.6 M12.2 12.2 L16 16 L19.8 12.2" stroke-width="1.8"/></g><path d="M12.6 22 h6.8 l0.8 3 h1.6 v1.4 H10.2 V25 h1.6 z" fill="#fff"/></svg>
<span class="t " style="top:1481px;font-size:26px;line-height:26px;color:#ffffff;letter-spacing:0.618px;-webkit-text-stroke:0.6px #ffffff;left:149.76px;">30 [presentDrawable:0x11060a...</span>
<svg class="i" style="left:87px;top:1518.2px;" width="9.5" height="16.4" viewBox="0 0 9.5 16.4"><path d="M1.5 1.5 L8 8.2 L1.5 14.9" fill="none" stroke="#8c8c8c" stroke-width="2.6" stroke-linecap="round" stroke-linejoin="round"/></svg>
<svg class="i" style="left:108px;top:1516px;border-radius:3px;overflow:hidden" width="30" height="64" viewBox="0 0 30 64"><defs><filter id="nz23" x="0" y="0" width="100%" height="100%" color-interpolation-filters="sRGB"><feTurbulence type="fractalNoise" baseFrequency="0.62" numOctaves="1" seed="23" result="n1"/><feColorMatrix in="n1" type="matrix" values="0 0 0 0 0.67  0 0 0 0 0.63  0 0 0 0 0.18  6 0 0 0 -2.6" result="yel"/><feTurbulence type="fractalNoise" baseFrequency="0.17 0.15" numOctaves="2" seed="28" result="n2"/><feColorMatrix in="n2" type="matrix" values="0 3.4 0 0 -1.25  0 0 1.4 0 -0.2  0 -3.4 0 0 2.35  18 0 0 0 -10.4" result="blob"/><feMerge result="m"><feMergeNode in="yel"/><feMergeNode in="blob"/></feMerge><feGaussianBlur in="m" stdDeviation="0.5"/></filter></defs><rect width="30" height="64" fill="#0d0c17"/><rect width="30" height="64" filter="url(#nz23)"/><rect x="0.5" y="0.5" width="29" height="63" rx="3" fill="none" stroke="#a9a9a9" stroke-width="1"/></svg>
<svg class="i" style="left:80px;top:1593px;" width="30" height="22" viewBox="0 0 30 22"><path d="M6.6 0.6 H23.4 a2.4 2.4 0 0 1 2.1 1.3 L29.6 10 V19 a2.6 2.6 0 0 1 -2.6 2.6 H3 a2.6 2.6 0 0 1 -2.6 -2.6 V10 L4.5 1.9 a2.4 2.4 0 0 1 2.1 -1.3 Z" fill="#b1b0b8"/><path d="M6.9 3 H23.1 L26.6 10 H3.4 Z" fill="#1c1c1c"/><rect x="8.2" y="4.2" width="13.6" height="1.6" rx="0.5" fill="#b1b0b8"/><rect x="7.2" y="7" width="15.6" height="1.8" rx="0.5" fill="#b1b0b8"/><path d="M2.6 10 H11.6 a3.4 3.4 0 0 0 6.8 0 H27.4 V11 H2.6 Z" fill="#b1b0b8"/><path d="M11.9 10 h6.2 a3.1 3.1 0 0 1 -6.2 0 Z" fill="#1c1c1c"/></svg>
<span class="t " style="top:1591px;font-size:26px;line-height:26px;color:#ffffff;letter-spacing:0.711px;-webkit-text-stroke:0.6px #ffffff;left:120.62px;">Main command pipeline</span>
<span class="t" style="left:459.41px;top:1595px;font-size:20px;line-height:20px;color:#999999;letter-spacing:0.85px;-webkit-text-stroke:0.35px #999999">11.22%</span>
<svg class="i" style="left:439.01px;top:1595.6px;" width="12" height="15" viewBox="0 0 12 15"><path d="M6 14.6 V1.4 M1 6.4 L6 1.4 L11 6.4" fill="none" stroke="#999999" stroke-width="1.9" stroke-linecap="round" stroke-linejoin="round"/></svg>
<svg class="i" style="left:543px;top:1593.4px;" width="22" height="21" viewBox="0 0 22 21"><path d="M11 0.8 a2 2 0 0 1 1.75 1 L21.4 17.4 a2 2 0 0 1 -1.75 3 H2.35 a2 2 0 0 1 -1.75 -3 L9.25 1.8 a2 2 0 0 1 1.75 -1 Z" fill="#5e5ce6"/><rect x="9.9" y="6" width="2.2" height="8" rx="1.1" fill="#fff"/><circle cx="11" cy="16.7" r="1.35" fill="#fff"/></svg>
<svg class="i" style="left:53.75px;top:1633px;" width="16.4" height="9.5" viewBox="0 0 16.4 9.5"><path d="M1.5 1.5 L8.2 8 L14.9 1.5" fill="none" stroke="#8c8c8c" stroke-width="2.6" stroke-linecap="round" stroke-linejoin="round"/></svg>
<svg class="i" style="left:80px;top:1626px;border-radius:3px;overflow:hidden" width="30" height="64" viewBox="0 0 30 64"><defs><filter id="nz3" x="0" y="0" width="100%" height="100%" color-interpolation-filters="sRGB"><feTurbulence type="fractalNoise" baseFrequency="0.62" numOctaves="1" seed="3" result="n1"/><feColorMatrix in="n1" type="matrix" values="0 0 0 0 0.67  0 0 0 0 0.63  0 0 0 0 0.18  6 0 0 0 -2.6" result="yel"/><feTurbulence type="fractalNoise" baseFrequency="0.17 0.15" numOctaves="2" seed="8" result="n2"/><feColorMatrix in="n2" type="matrix" values="0 3.4 0 0 -1.25  0 0 1.4 0 -0.2  0 -3.4 0 0 2.35  18 0 0 0 -10.4" result="blob"/><feMerge result="m"><feMergeNode in="yel"/><feMergeNode in="blob"/></feMerge><feGaussianBlur in="m" stdDeviation="0.5"/></filter></defs><rect width="30" height="64" fill="#0d0c17"/><rect width="30" height="64" filter="url(#nz3)"/></svg>
</div>
<div class="b" style="left:18px;top:1792px;width:596px;height:2px;background:#333"></div>
<div class="b" style="left:32px;top:1810px;width:568px;height:56px;border:1.6px solid #585858;border-radius:28px;background:#1c1c1c"></div>
<div class="b" style="left:45.5px;top:1825px;width:52.5px;height:26px;border:2px solid #7e7e7e;border-radius:13px"></div>
<svg class="i" style="left:55.2px;top:1831px;" width="34" height="14" viewBox="0 0 34 14"><g fill="none" stroke="#8a8a8a" stroke-width="1.9" stroke-linecap="butt"><path d="M0.6 2.6 H14.4 M2.8 6.8 H12.2 M4.8 11 H10.2"/><path d="M23.6 5 L27.6 9 L31.6 5" stroke-linecap="round" stroke-width="2.1" stroke-linejoin="round"/></g></svg>
<span class="t " style="top:1823px;font-size:26px;line-height:26px;color:#868686;letter-spacing:0.808px;-webkit-text-stroke:0.6px #868686;left:109.12px;">Filter</span>
<svg class="i" style="left:490px;top:1825px;" width="26.5" height="26" viewBox="0 0 26.5 26"><g fill="none" stroke="#8c8c8c" stroke-width="2"><path d="M1 1.2 H25.5 V3.6 H1 Z M1 22.4 H25.5 V24.8 H1 Z" stroke-width="1.6"/><rect x="9.4" y="8.4" width="7.8" height="9.2"/><path d="M13.3 4 V8.2 M13.3 17.8 V22"/></g></svg>
<svg class="i" style="left:525px;top:1827px;" width="24" height="22" viewBox="0 0 24 22"><g fill="none" stroke="#8c8c8c" stroke-width="1.9" stroke-linejoin="round" stroke-linecap="round"><path d="M12 1.6 L22.6 20.4 H1.4 Z"/><path d="M12 8.2 V13.6" stroke-width="2.2"/></g><circle cx="12" cy="17" r="1.3" fill="#8c8c8c"/></svg>
<svg class="i" style="left:556px;top:1823px;" width="30" height="30" viewBox="0 0 30 30"><g stroke="#3b82f6" stroke-width="2.1" stroke-linecap="round"><path d="M15.00 7.80 L15.00 3.40"/><path d="M20.09 9.91 L23.20 6.80"/><path d="M22.20 15.00 L26.60 15.00"/><path d="M15.00 22.20 L15.00 26.60"/><path d="M9.91 20.09 L6.80 23.20"/><path d="M7.80 15.00 L3.40 15.00"/><path d="M9.91 9.91 L6.80 6.80"/></g><path d="M14.6 14.6 L25.8 25.8" stroke="#3b82f6" stroke-width="3.6" stroke-linecap="round"/><path d="M15.4 15.4 L19 19" stroke="#1c1c1c" stroke-width="1.1" stroke-linecap="round"/></svg>
<div class="b" style="left:21px;top:29px;width:62px;height:46px;background:#333;border-radius:23px"></div>
<svg class="i" style="left:0px;top:0px;" width="90" height="90" viewBox="0 0 90 90"><circle cx="37" cy="41.9" r="2.3" fill="#e4e4e4"/><rect x="43.4" y="40.449999999999996" width="24.8" height="2.9" rx="1.45" fill="#e4e4e4"/><circle cx="37" cy="51.9" r="2.3" fill="#e4e4e4"/><rect x="43.4" y="50.449999999999996" width="24.8" height="2.9" rx="1.45" fill="#e4e4e4"/><circle cx="37" cy="61.9" r="2.3" fill="#e4e4e4"/><rect x="43.4" y="60.449999999999996" width="24.8" height="2.9" rx="1.45" fill="#e4e4e4"/></svg>
<svg class="i" style="left:0px;top:0px;" width="150" height="90" viewBox="0 0 150 90"><rect x="99.2" y="36.949999999999996" width="20.799999999999997" height="2.9" rx="1.45" fill="#8a8a8a"/><rect x="99.2" y="43.65" width="16.200000000000003" height="2.9" rx="1.45" fill="#8a8a8a"/><rect x="99.2" y="50.349999999999994" width="7.200000000000003" height="2.9" rx="1.45" fill="#8a8a8a"/><rect x="99.2" y="57.05" width="16.200000000000003" height="2.9" rx="1.45" fill="#8a8a8a"/><rect x="99.2" y="63.95" width="20.799999999999997" height="2.9" rx="1.45" fill="#8a8a8a"/><path d="M125.8 34.2 Q128.4 49.2 143.4 51.8 Q128.4 54.4 125.8 69.4 Q123.2 54.4 108.2 51.8 Q123.2 49.2 125.8 34.2 Z" fill="#dedede"/></svg>
<div class="b" style="left:509px;top:38px;width:27px;height:27px;background:#dedede;border-radius:3.5px"></div>
<div class="b" style="left:550.5px;top:34px;width:2px;height:36px;background:#303030"></div>
<svg class="i" style="left:568px;top:37px;" width="28" height="30" viewBox="0 0 28 30"><path d="M2 3.2 a2 2 0 0 1 3 -1.7 L25 13.2 a2 2 0 0 1 0 3.5 L5 28.5 a2 2 0 0 1 -3 -1.7 Z" fill="#dedede"/></svg>
<div class="b" style="left:32px;top:104px;width:568px;height:56px;background:#333;border-radius:28px"></div>
<div class="b" style="left:94px;top:114.5px;width:1.5px;height:35px;background:#474747"></div>
<div class="b" style="left:155.5px;top:114.5px;width:1.5px;height:35px;background:#474747"></div>
<div class="b" style="left:216.5px;top:114.5px;width:1.5px;height:35px;background:#474747"></div>
<div class="b" style="left:278px;top:114.5px;width:1.5px;height:35px;background:#474747"></div>
<div class="b" style="left:340.5px;top:114.5px;width:1.5px;height:35px;background:#474747"></div>
<div class="b" style="left:540px;top:114.5px;width:1.5px;height:35px;background:#474747"></div>
<div class="b" style="left:405px;top:104px;width:66px;height:56px;background:#3478f6;border-radius:50%"></div>
<svg class="i" style="left:48.52px;top:119.32px;" width="29.76" height="24.96" viewBox="0 0 31 26"><g fill="none" stroke="#ededed" stroke-width="2.45" stroke-linecap="round" stroke-linejoin="round"><path d="M1.4 6.2 V4.6 a3 3 0 0 1 3 -3 H9.2 a3 3 0 0 1 2.2 1 l1.2 1.4 a2 2 0 0 0 1.5 0.7 H26.6 a3 3 0 0 1 3 3 V21.2 a3 3 0 0 1 -3 3 H4.4 a3 3 0 0 1 -3 -3 Z"/><path d="M4.8 8.8 H26.2"/></g></svg>
<svg class="i" style="left:113.65px;top:120.55px;" width="23.5" height="23.5" viewBox="0 0 25 25"><g fill="none" stroke="#ededed" stroke-width="2.45" stroke-linecap="round" stroke-linejoin="round"><rect x="1.3" y="1.3" width="22.4" height="22.4" rx="3"/><path d="M5.6 5.6 L8.6 8.6 M19.4 5.6 L16.4 8.6 M5.6 19.4 L8.6 16.4 M19.4 19.4 L16.4 16.4" stroke-width="2"/></g><circle cx="12.5" cy="12.5" r="3.5" fill="#ededed"/></svg>
<svg class="i" style="left:177.0px;top:117.25px;" width="19.0" height="28.5" viewBox="0 0 20 30"><g fill="none" stroke="#ededed" stroke-width="2.45" stroke-linecap="round" stroke-linejoin="round"><path d="M2.8 27 V4.4 a2.6 2.6 0 0 1 2.6 -2.6 H14.6 a2.6 2.6 0 0 1 2.6 2.6 V27 L10 20 Z"/></g></svg>
<svg class="i" style="left:234.3px;top:118.3px;" width="26.6" height="26.6" viewBox="0 0 28 28"><g fill="none" stroke="#ededed" stroke-width="2.45" stroke-linecap="round" stroke-linejoin="round"><circle cx="11" cy="11" r="9.4"/><path d="M18 18 L25.6 25.6" stroke-width="2.9"/></g></svg>
<svg class="i" style="left:295.62px;top:119.25px;" width="27.55" height="24.7" viewBox="0 0 29 26"><g fill="none" stroke="#ededed" stroke-width="2.45" stroke-linecap="round" stroke-linejoin="round"><path d="M14.5 1.6 a2.2 2.2 0 0 1 1.9 1.1 L27.2 21.4 a2.2 2.2 0 0 1 -1.9 3.3 H3.7 a2.2 2.2 0 0 1 -1.9 -3.3 L12.6 2.7 a2.2 2.2 0 0 1 1.9 -1.1 Z"/><path d="M14.5 9 V15.2" stroke-width="2.6"/></g><circle cx="14.5" cy="19.6" r="1.6" fill="#ededed"/></svg>
<svg class="i" style="left:357.45px;top:117.75px;" width="28.5" height="28.5" viewBox="0 0 30 30"><g fill="none" stroke="#ededed" stroke-width="2.45" stroke-linecap="round" stroke-linejoin="round"><path d="M13.2 2 a2.6 2.6 0 0 1 3.6 0 L28 13.2 a2.6 2.6 0 0 1 0 3.6 L16.8 28 a2.6 2.6 0 0 1 -3.6 0 L2 16.8 a2.6 2.6 0 0 1 0 -3.6 Z"/><path d="M10.4 15.6 L13.6 19.2 L19.8 10.6" stroke-width="2.3"/></g></svg>
<svg class="i" style="left:420px;top:111px;" width="44" height="40" viewBox="0 0 44 40"><g transform="rotate(24 17 22)" fill="none" stroke="#fff" stroke-width="2.2" stroke-linejoin="round" stroke-linecap="round"><path d="M9.4 15.4 a3.8 3.8 0 0 1 3.8 -3.8 H20.8 a3.8 3.8 0 0 1 3.8 3.8 V29.6 a2.6 2.6 0 0 1 -2.6 2.6 H12 a2.6 2.6 0 0 1 -2.6 -2.6 Z"/><path d="M13 11.4 V8.8 H21 V11.4"/><path d="M15.2 8.4 V6.2 H18.8 V8.4" fill="#fff"/><path d="M14 18.6 L20 25 M20 18.6 L14 25" stroke-width="1.9"/></g><g fill="#fff"><circle cx="27" cy="7.2" r="0.95"/><circle cx="31.2" cy="8" r="0.95"/><circle cx="35.6" cy="8" r="0.95"/><circle cx="39.4" cy="8.6" r="0.95"/><circle cx="33.4" cy="11.4" r="0.95"/><circle cx="37.6" cy="12" r="0.95"/><circle cx="35.8" cy="15.6" r="0.95"/></g></svg>
<svg class="i" style="left:488.9px;top:120.46px;" width="32.2" height="22.08" viewBox="0 0 35 24"><g fill="none" stroke="#ededed" stroke-width="2.45" stroke-linecap="round" stroke-linejoin="round"><path d="M1.4 4.4 a3 3 0 0 1 3 -3 H23.6 a3 3 0 0 1 2.3 1 L32.6 10.2 a2.8 2.8 0 0 1 0 3.6 L25.9 21.6 a3 3 0 0 1 -2.3 1 H4.4 a3 3 0 0 1 -3 -3 Z"/></g></svg>
<svg class="i" style="left:558.42px;top:118.17px;" width="22.56" height="27.26" viewBox="0 0 24 29"><g fill="none" stroke="#ededed" stroke-width="2.45" stroke-linecap="round" stroke-linejoin="round"><path d="M1.6 26 V4.2 a2.6 2.6 0 0 1 2.6 -2.6 H19.8 a2.6 2.6 0 0 1 2.6 2.6 V26 l-2.6 1.6 l-2.6 -1.6 l-2.6 1.6 l-2.6 -1.6 l-2.6 1.6 l-2.6 -1.6 l-2.6 1.6 Z"/><path d="M6.2 7.6 H13.4 M6.2 12.4 H13.4 M6.2 17.2 H13.4 M6.2 22 H13.4 M17 7.6 H17.8 M17 12.4 H17.8 M17 17.2 H17.8 M17 22 H17.8" stroke-width="1.9"/></g></svg>
<svg class="i" style="left:658px;top:35px;" width="32" height="36" viewBox="0 0 32 36"><g fill="none" stroke="#9c9c9c" stroke-width="2.9" stroke-linecap="round"><path d="M5.6 9 V26.5"/><path d="M26 11.8 C26 17.6 18.6 18.6 11.4 19 C7.8 19.2 5.6 20.2 5.6 23"/></g><g fill="#9c9c9c"><circle cx="5.6" cy="5.8" r="3.8"/><circle cx="5.6" cy="29.4" r="3.8"/><circle cx="26" cy="8.4" r="3.8"/></g></svg>
<span class="t " style="top:26px;font-size:26px;line-height:26px;color:#e8e8e8;letter-spacing:1.013px;-webkit-text-stroke:0.55px #e8e8e8;font-weight:700;left:703.43px;">Quantum</span>
<span class="t " style="top:58px;font-size:22px;line-height:22px;color:#999999;letter-spacing:0.914px;-webkit-text-stroke:0.45px #999999;left:704.19px;">feature/onboarding</span>
<div class="b" style="left:1224px;top:16px;width:1194px;height:72px;border:2px solid #2f2f2f;border-radius:36px;background:#1b1b1b"></div>
<svg class="i" style="left:1249.5px;top:37px;" width="29" height="29.5" viewBox="0 0 29 29.5"><defs><clipPath id="apc"><rect width="29" height="29.5" rx="6"/></clipPath><linearGradient id="ag1" gradientUnits="userSpaceOnUse" x1="4" y1="4" x2="21" y2="13"><stop offset="0" stop-color="#ff36aa"/><stop offset="0.35" stop-color="#ff36aa"/><stop offset="0.6" stop-color="#7a56c4"/><stop offset="1" stop-color="#c8287f"/></linearGradient><linearGradient id="ag2" gradientUnits="userSpaceOnUse" x1="26" y1="4" x2="16" y2="22"><stop offset="0" stop-color="#ffe54f"/><stop offset="0.35" stop-color="#ffe04c"/><stop offset="0.6" stop-color="#de7a42"/><stop offset="1" stop-color="#d2ac38"/></linearGradient><linearGradient id="ag3" gradientUnits="userSpaceOnUse" x1="25" y1="26" x2="8" y2="17"><stop offset="0" stop-color="#80ff55"/><stop offset="0.35" stop-color="#7cf850"/><stop offset="0.6" stop-color="#79c93a"/><stop offset="1" stop-color="#4fa52c"/></linearGradient><linearGradient id="ag4" gradientUnits="userSpaceOnUse" x1="3" y1="25" x2="14" y2="8"><stop offset="0" stop-color="#5fc0ff"/><stop offset="0.35" stop-color="#5bb6fb"/><stop offset="0.6" stop-color="#55ad8e"/><stop offset="1" stop-color="#3b7fc0"/></linearGradient></defs><g clip-path="url(#apc)" fill="none" stroke-linecap="round"><rect width="29" height="29.5" fill="#040404" stroke="none"/><path d="M4 24.5 V17 C4 11 8 8.5 13 8.5" stroke="url(#ag4)" stroke-width="7"/><path d="M24 26 H17 C11.5 26 9 21 9.5 17.5" stroke="url(#ag3)" stroke-width="7"/><path d="M25.5 5 V12 C25.5 18 21 21 16 21.5" stroke="url(#ag2)" stroke-width="7"/><path d="M5 3.6 H13 C18.5 3.6 21 8 20.5 12.5" stroke="url(#ag1)" stroke-width="7"/><path d="M4 24.5 V19" stroke="#5fc0ff" stroke-width="6"/><path d="M14.5 10.6 L19 15 L14.5 19.6 L10 15 Z" fill="#040404" stroke="none"/></g></svg>
<span class="t" style="left:1288.2px;top:41px;font-size:23px;line-height:23px;color:#dedede;letter-spacing:0.25px;-webkit-text-stroke:0.45px #dedede;width:70px;overflow:hidden;-webkit-mask-image:linear-gradient(90deg,#000 0,#000 46px,transparent 69px);mask-image:linear-gradient(90deg,#000 0,#000 46px,transparent 69px)">Quantum</span>
<svg class="i" style="left:1366.5px;top:42px;" width="8" height="20" viewBox="0 0 8 20"><path d="M1.2 1 C4.4 6 6.2 8.4 6.2 10 C6.2 11.6 4.4 14 1.2 19" fill="none" stroke="#c4c4c4" stroke-width="2.0" stroke-linecap="round"/></svg>
<svg class="i" style="left:1401px;top:35.5px;" width="18" height="32" viewBox="0 0 18 32"><defs><linearGradient id="iph" x1="0" y1="0" x2="0" y2="1"><stop offset="0" stop-color="#3f7fce"/><stop offset="1" stop-color="#6fb0ee"/></linearGradient></defs><rect x="1" y="1" width="16" height="30" rx="4.2" fill="url(#iph)" stroke="#8d97a8" stroke-width="1.4"/><rect x="2.4" y="2.4" width="13.2" height="27.2" rx="3" fill="none" stroke="#10141c" stroke-width="1"/><rect x="6.4" y="3.8" width="5.2" height="1.5" rx="0.75" fill="#0e1218"/></svg>
<span class="t " style="top:41px;font-size:23px;line-height:23px;color:#dedede;letter-spacing:0.091px;-webkit-text-stroke:0.45px #dedede;left:1433.34px;">George’s iPhone</span>
<span class="t " style="top:41px;font-size:23px;line-height:23px;color:#dedede;letter-spacing:0.224px;-webkit-text-stroke:0.45px #dedede;left:1957.66px;">Quantum - Debugging GPU Workload</span>
<div class="b" style="left:2362px;top:36px;width:32px;height:32px;background:#343434;border-radius:16px"></div>
<span class="t " style="top:43px;font-size:20px;line-height:20px;color:#dcdcdc;letter-spacing:0.000px;-webkit-text-stroke:0.35px #dcdcdc;left:2371.79px;">2</span>
<div class="b" style="left:2450px;top:16px;width:100px;height:72px;border:2px solid #2f2f2f;border-radius:36px;background:#1b1b1b"></div>
<svg class="i" style="left:2471px;top:41.2px;" width="25" height="22.6" viewBox="0 0 22 21"><path d="M11 0.8 a2 2 0 0 1 1.75 1 L21.4 17.4 a2 2 0 0 1 -1.75 3 H2.35 a2 2 0 0 1 -1.75 -3 L9.25 1.8 a2 2 0 0 1 1.75 -1 Z" fill="#f6d13d"/><rect x="9.9" y="6" width="2.2" height="8" rx="1.1" fill="#fff"/><circle cx="11" cy="16.7" r="1.35" fill="#fff"/></svg>
<span class="t " style="top:41px;font-size:23px;line-height:23px;color:#e4e4e4;letter-spacing:3.141px;-webkit-text-stroke:0.3px #e4e4e4;font-weight:700;left:2501.47px;">30</span>
<div class="b" style="left:2929px;top:16px;width:72px;height:72px;border:2px solid #2f2f2f;border-radius:36px;background:#1b1b1b"></div>
<svg class="i" style="left:2948px;top:36px;" width="41" height="32" viewBox="0 0 41 32"><g fill="none" stroke="#dedede" stroke-width="2.6" stroke-linecap="round"><rect x="1.8" y="2" width="37" height="28" rx="5.5"/><path d="M26.4 2.4 V29.6" stroke-width="2.2"/><path d="M31 8.6 H34.4 M31 13.4 H34.4 M31 18.2 H34.4" stroke-width="1.9"/></g></svg>
<svg class="i" style="left:641.2px;top:120.1px;" width="26" height="26" viewBox="0 0 27 27"><rect x="1.2" y="1.2" width="9.6" height="9.6" rx="2" fill="none" stroke="#8a8a8a" stroke-width="1.7"/><rect x="1.2" y="15.6" width="9.6" height="9.6" rx="2" fill="none" stroke="#8a8a8a" stroke-width="1.7"/><rect x="15.6" y="1.2" width="9.6" height="9.6" rx="2" fill="none" stroke="#8a8a8a" stroke-width="1.7"/><rect x="15.6" y="15.6" width="9.6" height="9.6" rx="2" fill="none" stroke="#8a8a8a" stroke-width="1.7"/></svg>
<div class="b" style="left:686px;top:120px;width:2px;height:24px;background:#3a3a3a"></div>
<svg class="i" style="left:704px;top:120px;" width="16" height="24" viewBox="0 0 16 24"><path d="M13.2 1.6 L2.2 12 L13.2 22.4" fill="none" stroke="#9e9e9e" stroke-width="2.1" stroke-linecap="round" stroke-linejoin="round"/></svg>
<svg class="i" style="left:743px;top:120px;" width="16" height="24" viewBox="0 0 16 24"><path d="M2.8 1.6 L13.8 12 L2.8 22.4" fill="none" stroke="#5a5a5a" stroke-width="2.1" stroke-linecap="round" stroke-linejoin="round"/></svg>
<svg class="i" style="left:788px;top:121px;" width="21" height="24" viewBox="0 0 21 24"><g fill="none" stroke="#a9c8ea" stroke-width="2" stroke-linejoin="round"><path d="M4.4 1.4 H11.4 L19 9 V20 a2.6 2.6 0 0 1 -2.6 2.6 H4.4 a2.6 2.6 0 0 1 -2.6 -2.6 V4 a2.6 2.6 0 0 1 2.6 -2.6 Z"/><path d="M11.2 1.6 V6.6 a2.6 2.6 0 0 0 2.6 2.6 H18.8"/></g></svg>
<span class="t " style="top:122px;font-size:22px;line-height:22px;color:#dedede;letter-spacing:0.954px;-webkit-text-stroke:0.45px #dedede;left:821.46px;">Quantum.gputrace</span>
<svg class="i" style="left:1028.5px;top:123px;" width="8" height="20" viewBox="0 0 8 20"><path d="M1.2 1 C4.4 6 6.2 8.4 6.2 10 C6.2 11.6 4.4 14 1.2 19" fill="none" stroke="#8f8f8f" stroke-width="2.3" stroke-linecap="round"/></svg>
<svg class="i" style="left:1053px;top:122.5px;" width="26" height="19.5" viewBox="0 0 30 22"><path d="M6.6 0.6 H23.4 a2.4 2.4 0 0 1 2.1 1.3 L29.6 10 V19 a2.6 2.6 0 0 1 -2.6 2.6 H3 a2.6 2.6 0 0 1 -2.6 -2.6 V10 L4.5 1.9 a2.4 2.4 0 0 1 2.1 -1.3 Z" fill="#b1b0b8"/><path d="M6.9 3 H23.1 L26.6 10 H3.4 Z" fill="#1e1e1e"/><rect x="8.2" y="4.2" width="13.6" height="1.6" rx="0.5" fill="#b1b0b8"/><rect x="7.2" y="7" width="15.6" height="1.8" rx="0.5" fill="#b1b0b8"/><path d="M2.6 10 H11.6 a3.4 3.4 0 0 0 6.8 0 H27.4 V11 H2.6 Z" fill="#b1b0b8"/><path d="M11.9 10 h6.2 a3.1 3.1 0 0 1 -6.2 0 Z" fill="#1e1e1e"/></svg>
<span class="t " style="top:122px;font-size:22px;line-height:22px;color:#dedede;letter-spacing:0.848px;-webkit-text-stroke:0.45px #dedede;left:1088.70px;">Main command pipeline</span>
<svg class="i" style="left:1350px;top:123px;" width="8" height="20" viewBox="0 0 8 20"><path d="M1.2 1 C4.4 6 6.2 8.4 6.2 10 C6.2 11.6 4.4 14 1.2 19" fill="none" stroke="#8f8f8f" stroke-width="2.3" stroke-linecap="round"/></svg>
<svg class="i" style="left:1372px;top:116px;" width="32" height="32" viewBox="0 0 32 32"><rect x="0" y="0" width="32" height="32" rx="7" fill="#e9584f"/><rect x="8" y="5.4" width="16" height="22.8" rx="3" fill="#fff"/><rect x="10.6" y="8" width="10.8" height="4.4" rx="1" fill="#e9584f"/><circle cx="11.6" cy="16" r="1.35" fill="#e9584f"/><circle cx="16" cy="16" r="1.35" fill="#e9584f"/><circle cx="20.4" cy="16" r="1.35" fill="#e9584f"/><circle cx="11.6" cy="20" r="1.35" fill="#e9584f"/><circle cx="16" cy="20" r="1.35" fill="#e9584f"/><circle cx="20.4" cy="20" r="1.35" fill="#e9584f"/><circle cx="11.6" cy="24" r="1.35" fill="#e9584f"/><circle cx="16" cy="24" r="1.35" fill="#e9584f"/><circle cx="20.4" cy="24" r="1.35" fill="#e9584f"/></svg>
<span class="t" style="left:1412.5px;top:122px;font-size:22px;line-height:22px;color:#dedede;letter-spacing:0.62px;-webkit-text-stroke:0.45px #dedede;width:290px;overflow:hidden;-webkit-mask-image:linear-gradient(90deg,#000 0,#000 262px,transparent 289px);mask-image:linear-gradient(90deg,#000 0,#000 262px,transparent 289px)">Compute Encoder 0 0x10b827b10</span>
<svg class="i" style="left:1706px;top:123px;" width="8" height="20" viewBox="0 0 8 20"><path d="M1.2 1 C4.4 6 6.2 8.4 6.2 10 C6.2 11.6 4.4 14 1.2 19" fill="none" stroke="#8f8f8f" stroke-width="2.3" stroke-linecap="round"/></svg>
<svg class="i" style="left:1728px;top:116px;" width="32" height="32" viewBox="0 0 32 32"><rect x="0" y="0" width="32" height="32" rx="7" fill="#3d84f5"/><g stroke="#fff" stroke-width="2.1" stroke-linecap="round"><path d="M15.00 7.80 L15.00 3.40"/><path d="M20.09 9.91 L23.20 6.80"/><path d="M22.20 15.00 L26.60 15.00"/><path d="M15.00 22.20 L15.00 26.60"/><path d="M9.91 20.09 L6.80 23.20"/><path d="M7.80 15.00 L3.40 15.00"/><path d="M9.91 9.91 L6.80 6.80"/></g><path d="M14.6 14.6 L25.8 25.8" stroke="#fff" stroke-width="3.6" stroke-linecap="round"/><path d="M15.4 15.4 L19 19" stroke="#3d84f5" stroke-width="1.1" stroke-linecap="round"/></svg>
<span class="t " style="top:122px;font-size:22px;line-height:22px;color:#dedede;letter-spacing:0.595px;-webkit-text-stroke:0.45px #dedede;left:1766.57px;">10 [dispatchThreads:{10000, 1, 1} threadsPerThreadgroup:{32, 1, 1}]</span>
<svg class="i" style="left:2488.5px;top:123px;" width="8" height="20" viewBox="0 0 8 20"><path d="M1.2 1 C4.4 6 6.2 8.4 6.2 10 C6.2 11.6 4.4 14 1.2 19" fill="none" stroke="#8f8f8f" stroke-width="2.3" stroke-linecap="round"/></svg>
<svg class="i" style="left:2510px;top:116px;" width="32" height="32" viewBox="0 0 32 32"><rect x="0" y="0" width="32" height="32" rx="7" fill="#bdd4ea"/><circle cx="16" cy="16" r="10" fill="none" stroke="#fff" stroke-width="2.2"/><circle cx="10.28" cy="12.70" r="0.95" fill="#fff"/><circle cx="12.70" cy="10.28" r="0.95" fill="#fff"/><circle cx="16.00" cy="9.40" r="0.95" fill="#fff"/><circle cx="19.30" cy="10.28" r="0.95" fill="#fff"/><circle cx="21.72" cy="12.70" r="0.95" fill="#fff"/><path d="M15.1 12.2 h1.8 l0.9 9.2 a1.8 1.8 0 0 1 -3.6 0 z" fill="#fff"/></svg>
<span class="t " style="top:122px;font-size:22px;line-height:22px;color:#dedede;letter-spacing:1.035px;-webkit-text-stroke:0.45px #dedede;left:2548.95px;">Performance</span>
<svg class="i" style="left:2725.5px;top:120px;" width="16" height="24" viewBox="0 0 16 24"><path d="M13.2 1.8 L2.4 12 L13.2 22.2" fill="none" stroke="#b0b0b0" stroke-width="2.1" stroke-linecap="round" stroke-linejoin="round"/></svg>
<svg class="i" style="left:2757px;top:121.5px;" width="22.5" height="20.5" viewBox="0 0 22 21"><path d="M11 0.8 a2 2 0 0 1 1.75 1 L21.4 17.4 a2 2 0 0 1 -1.75 3 H2.35 a2 2 0 0 1 -1.75 -3 L9.25 1.8 a2 2 0 0 1 1.75 -1 Z" fill="#f6d13d"/><rect x="9.9" y="6" width="2.2" height="8" rx="1.1" fill="#fff"/><circle cx="11" cy="16.7" r="1.35" fill="#fff"/></svg>
<svg class="i" style="left:2793px;top:120px;" width="16" height="24" viewBox="0 0 16 24"><path d="M2.8 1.8 L13.6 12 L2.8 22.2" fill="none" stroke="#b0b0b0" stroke-width="2.1" stroke-linecap="round" stroke-linejoin="round"/></svg>
<svg class="i" style="left:2835px;top:115px;" width="29" height="34" viewBox="0 0 29 34"><g fill="none" stroke="#a8a8a8" stroke-width="2" stroke-linecap="round" stroke-linejoin="round"><path d="M27 9.4 H2.4 M9.6 1.8 L2 9.4 L9.6 17"/><path d="M2 24.6 H26.6 M19.4 17 L27 24.6 L19.4 32.2"/></g></svg>
<svg class="i" style="left:2891px;top:119.5px;" width="30" height="26" viewBox="0 0 30 26"><g stroke="#a8a8a8" stroke-width="2" stroke-linecap="round"><path d="M1.6 1.6 H28.4 M1.6 9 H17.4 M1.6 16.4 H28.4 M1.6 23.8 H17.4"/></g></svg>
<div class="b" style="left:2941.5px;top:120.5px;width:2px;height:23.5px;background:#3a3a3a"></div>
<svg class="i" style="left:2967px;top:121px;" width="25" height="25" viewBox="0 0 25 25"><path d="M12.2 1.4 V23 M1.4 12.2 H23" stroke="#a8a8a8" stroke-width="2.2" stroke-linecap="round"/></svg>
<span class="t " style="top:188px;font-size:22px;line-height:22px;color:#ffffff;letter-spacing:0.939px;-webkit-text-stroke:0.45px #ffffff;left:652.70px;">Potential Hotspots/Bottlenecks</span>
<div class="b" style="left:2638.5px;top:182.5px;width:2px;height:31.5px;background:#3e3e3e"></div>
<span class="t " style="top:348px;font-size:22px;line-height:22px;color:#ffffff;letter-spacing:0.914px;-webkit-text-stroke:0.45px #ffffff;left:653.38px;">Counters</span>
<div class="b" style="left:2246px;top:342px;width:2px;height:32px;background:#3e3e3e"></div>
<div class="b" style="left:2436px;top:342px;width:2px;height:32px;background:#3e3e3e"></div>
<div class="b" style="left:2634px;top:342px;width:2px;height:32px;background:#3e3e3e"></div>
<span class="t " style="top:348px;font-size:22px;line-height:22px;color:#ffffff;letter-spacing:0.805px;-webkit-text-stroke:0.45px #ffffff;right:598.25px;">Draw</span>
<span class="t " style="top:348px;font-size:22px;line-height:22px;color:#ffffff;letter-spacing:0.872px;-webkit-text-stroke:0.45px #ffffff;right:407.76px;">Encoder</span>
<span class="t " style="top:394px;font-size:22px;line-height:22px;color:#ffffff;letter-spacing:0.536px;-webkit-text-stroke:0.3px #ffffff;font-weight:700;left:657.13px;">Performance Limiters</span>
<span class="t " style="top:430px;font-size:22px;line-height:22px;color:#dcdcdc;letter-spacing:0.829px;-webkit-text-stroke:0.45px #dcdcdc;left:677.26px;">Occupancy Manager Target</span>
<span class="t " style="top:430px;font-size:22px;line-height:22px;color:#dcdcdc;letter-spacing:0.961px;-webkit-text-stroke:0.45px #dcdcdc;right:593.75px;">N/A</span>
<span class="t " style="top:430px;font-size:22px;line-height:22px;color:#dcdcdc;letter-spacing:1.580px;-webkit-text-stroke:0.45px #dcdcdc;right:402.39px;">100.00%</span>
<span class="t " style="top:466px;font-size:22px;line-height:22px;color:#dcdcdc;letter-spacing:1.033px;-webkit-text-stroke:0.45px #dcdcdc;left:676.27px;">Instruction Throughput Limiter</span>
<span class="t " style="top:466px;font-size:22px;line-height:22px;color:#dcdcdc;letter-spacing:0.961px;-webkit-text-stroke:0.45px #dcdcdc;right:593.75px;">N/A</span>
<span class="t " style="top:466px;font-size:22px;line-height:22px;color:#dcdcdc;letter-spacing:1.580px;-webkit-text-stroke:0.45px #dcdcdc;right:402.39px;">62.41%</span>
<span class="t " style="top:502px;font-size:22px;line-height:22px;color:#dcdcdc;letter-spacing:1.038px;-webkit-text-stroke:0.45px #dcdcdc;left:676.27px;">Instruction Throughput Utilization</span>
<span class="t " style="top:502px;font-size:22px;line-height:22px;color:#dcdcdc;letter-spacing:0.961px;-webkit-text-stroke:0.45px #dcdcdc;right:593.75px;">N/A</span>
<span class="t " style="top:502px;font-size:22px;line-height:22px;color:#dcdcdc;letter-spacing:1.580px;-webkit-text-stroke:0.45px #dcdcdc;right:402.39px;">22.72%</span>
<span class="t " style="top:538px;font-size:22px;line-height:22px;color:#dcdcdc;letter-spacing:0.800px;-webkit-text-stroke:0.45px #dcdcdc;left:678.26px;">ALU Utilization</span>
<span class="t " style="top:538px;font-size:22px;line-height:22px;color:#dcdcdc;letter-spacing:0.961px;-webkit-text-stroke:0.45px #dcdcdc;right:593.75px;">N/A</span>
<span class="t " style="top:538px;font-size:22px;line-height:22px;color:#dcdcdc;letter-spacing:1.580px;-webkit-text-stroke:0.45px #dcdcdc;right:402.39px;">32.78%</span>
<span class="t " style="top:574px;font-size:22px;line-height:22px;color:#dcdcdc;letter-spacing:1.015px;-webkit-text-stroke:0.45px #dcdcdc;left:676.50px;">F32 Limiter</span>
<span class="t " style="top:574px;font-size:22px;line-height:22px;color:#dcdcdc;letter-spacing:0.961px;-webkit-text-stroke:0.45px #dcdcdc;right:593.75px;">N/A</span>
<span class="t " style="top:574px;font-size:22px;line-height:22px;color:#dcdcdc;letter-spacing:1.580px;-webkit-text-stroke:0.45px #dcdcdc;right:402.39px;">46.74%</span>
<span class="t " style="top:610px;font-size:22px;line-height:22px;color:#dcdcdc;letter-spacing:1.061px;-webkit-text-stroke:0.45px #dcdcdc;left:676.50px;">F32 Utilization</span>
<span class="t " style="top:610px;font-size:22px;line-height:22px;color:#dcdcdc;letter-spacing:0.961px;-webkit-text-stroke:0.45px #dcdcdc;right:593.75px;">N/A</span>
<span class="t " style="top:610px;font-size:22px;line-height:22px;color:#dcdcdc;letter-spacing:1.580px;-webkit-text-stroke:0.45px #dcdcdc;right:402.39px;">34.83%</span>
<span class="t " style="top:646px;font-size:22px;line-height:22px;color:#dcdcdc;letter-spacing:1.015px;-webkit-text-stroke:0.45px #dcdcdc;left:676.50px;">F16 Limiter</span>
<span class="t " style="top:646px;font-size:22px;line-height:22px;color:#dcdcdc;letter-spacing:0.961px;-webkit-text-stroke:0.45px #dcdcdc;right:593.75px;">N/A</span>
<span class="t " style="top:646px;font-size:22px;line-height:22px;color:#dcdcdc;letter-spacing:1.580px;-webkit-text-stroke:0.45px #dcdcdc;right:402.39px;">0.00%</span>
<span class="t " style="top:682px;font-size:22px;line-height:22px;color:#dcdcdc;letter-spacing:1.061px;-webkit-text-stroke:0.45px #dcdcdc;left:676.50px;">F16 Utilization</span>
<span class="t " style="top:682px;font-size:22px;line-height:22px;color:#dcdcdc;letter-spacing:0.961px;-webkit-text-stroke:0.45px #dcdcdc;right:593.75px;">N/A</span>
<span class="t " style="top:682px;font-size:22px;line-height:22px;color:#dcdcdc;letter-spacing:1.580px;-webkit-text-stroke:0.45px #dcdcdc;right:402.39px;">0.00%</span>
<span class="t " style="top:718px;font-size:22px;line-height:22px;color:#dcdcdc;letter-spacing:0.799px;-webkit-text-stroke:0.45px #dcdcdc;left:676.27px;">Integer and Complex Limiter</span>
<span class="t " style="top:718px;font-size:22px;line-height:22px;color:#dcdcdc;letter-spacing:0.961px;-webkit-text-stroke:0.45px #dcdcdc;right:593.75px;">N/A</span>
<span class="t " style="top:718px;font-size:22px;line-height:22px;color:#dcdcdc;letter-spacing:1.580px;-webkit-text-stroke:0.45px #dcdcdc;right:402.39px;">19.70%</span>
<span class="t " style="top:754px;font-size:22px;line-height:22px;color:#dcdcdc;letter-spacing:0.859px;-webkit-text-stroke:0.45px #dcdcdc;left:676.27px;">Integer and Complex Utilization</span>
<span class="t " style="top:754px;font-size:22px;line-height:22px;color:#dcdcdc;letter-spacing:0.961px;-webkit-text-stroke:0.45px #dcdcdc;right:593.75px;">N/A</span>
<span class="t " style="top:754px;font-size:22px;line-height:22px;color:#dcdcdc;letter-spacing:1.580px;-webkit-text-stroke:0.45px #dcdcdc;right:402.39px;">18.09%</span>
<span class="t " style="top:790px;font-size:22px;line-height:22px;color:#dcdcdc;letter-spacing:0.840px;-webkit-text-stroke:0.45px #dcdcdc;left:676.27px;">Integer and Conditional Limiter</span>
<span class="t " style="top:790px;font-size:22px;line-height:22px;color:#dcdcdc;letter-spacing:0.961px;-webkit-text-stroke:0.45px #dcdcdc;right:593.75px;">N/A</span>
<span class="t " style="top:790px;font-size:22px;line-height:22px;color:#dcdcdc;letter-spacing:1.580px;-webkit-text-stroke:0.45px #dcdcdc;right:402.39px;">27.09%</span>
<span class="t " style="top:826px;font-size:22px;line-height:22px;color:#dcdcdc;letter-spacing:0.868px;-webkit-text-stroke:0.45px #dcdcdc;left:676.27px;">Integer and Conditional Utilization</span>
<span class="t " style="top:826px;font-size:22px;line-height:22px;color:#dcdcdc;letter-spacing:0.961px;-webkit-text-stroke:0.45px #dcdcdc;right:593.75px;">N/A</span>
<span class="t " style="top:826px;font-size:22px;line-height:22px;color:#dcdcdc;letter-spacing:1.580px;-webkit-text-stroke:0.45px #dcdcdc;right:402.39px;">21.70%</span>
<span class="t " style="top:862px;font-size:22px;line-height:22px;color:#dcdcdc;letter-spacing:0.647px;-webkit-text-stroke:0.45px #dcdcdc;left:677.81px;">Texture Read Limiter</span>
<span class="t " style="top:862px;font-size:22px;line-height:22px;color:#dcdcdc;letter-spacing:0.961px;-webkit-text-stroke:0.45px #dcdcdc;right:593.75px;">N/A</span>
<span class="t " style="top:862px;font-size:22px;line-height:22px;color:#dcdcdc;letter-spacing:1.580px;-webkit-text-stroke:0.45px #dcdcdc;right:402.39px;">0.00%</span>
<span class="t " style="top:898px;font-size:22px;line-height:22px;color:#dcdcdc;letter-spacing:0.739px;-webkit-text-stroke:0.45px #dcdcdc;left:677.81px;">Texture Read Utilization</span>
<span class="t " style="top:898px;font-size:22px;line-height:22px;color:#dcdcdc;letter-spacing:0.961px;-webkit-text-stroke:0.45px #dcdcdc;right:593.75px;">N/A</span>
<span class="t " style="top:898px;font-size:22px;line-height:22px;color:#dcdcdc;letter-spacing:1.580px;-webkit-text-stroke:0.45px #dcdcdc;right:402.39px;">0.00%</span>
<span class="t " style="top:934px;font-size:22px;line-height:22px;color:#dcdcdc;letter-spacing:0.848px;-webkit-text-stroke:0.45px #dcdcdc;left:677.81px;">Texture Write Limiter</span>
<span class="t " style="top:934px;font-size:22px;line-height:22px;color:#dcdcdc;letter-spacing:0.961px;-webkit-text-stroke:0.45px #dcdcdc;right:593.75px;">N/A</span>
<span class="t " style="top:934px;font-size:22px;line-height:22px;color:#dcdcdc;letter-spacing:1.580px;-webkit-text-stroke:0.45px #dcdcdc;right:402.39px;">0.00%</span>
<span class="t " style="top:970px;font-size:22px;line-height:22px;color:#dcdcdc;letter-spacing:0.886px;-webkit-text-stroke:0.45px #dcdcdc;left:677.81px;">Texture Write Utilization</span>
<span class="t " style="top:970px;font-size:22px;line-height:22px;color:#dcdcdc;letter-spacing:0.961px;-webkit-text-stroke:0.45px #dcdcdc;right:593.75px;">N/A</span>
<span class="t " style="top:970px;font-size:22px;line-height:22px;color:#dcdcdc;letter-spacing:1.580px;-webkit-text-stroke:0.45px #dcdcdc;right:402.39px;">0.00%</span>
<span class="t " style="top:1006px;font-size:22px;line-height:22px;color:#dcdcdc;letter-spacing:1.021px;-webkit-text-stroke:0.45px #dcdcdc;left:676.50px;">MMU Limiter</span>
<span class="t " style="top:1006px;font-size:22px;line-height:22px;color:#dcdcdc;letter-spacing:0.961px;-webkit-text-stroke:0.45px #dcdcdc;right:593.75px;">N/A</span>
<span class="t " style="top:1006px;font-size:22px;line-height:22px;color:#dcdcdc;letter-spacing:1.580px;-webkit-text-stroke:0.45px #dcdcdc;right:402.39px;">0.02%</span>
<span class="t " style="top:1042px;font-size:22px;line-height:22px;color:#dcdcdc;letter-spacing:1.044px;-webkit-text-stroke:0.45px #dcdcdc;left:676.50px;">MMU Utilization</span>
<span class="t " style="top:1042px;font-size:22px;line-height:22px;color:#dcdcdc;letter-spacing:0.961px;-webkit-text-stroke:0.45px #dcdcdc;right:593.75px;">N/A</span>
<span class="t " style="top:1042px;font-size:22px;line-height:22px;color:#dcdcdc;letter-spacing:1.580px;-webkit-text-stroke:0.45px #dcdcdc;right:402.39px;">0.02%</span>
<span class="t " style="top:1078px;font-size:22px;line-height:22px;color:#dcdcdc;letter-spacing:0.686px;-webkit-text-stroke:0.45px #dcdcdc;left:676.50px;">Last Level Cache Limiter</span>
<span class="t " style="top:1078px;font-size:22px;line-height:22px;color:#dcdcdc;letter-spacing:0.961px;-webkit-text-stroke:0.45px #dcdcdc;right:593.75px;">N/A</span>
<span class="t " style="top:1078px;font-size:22px;line-height:22px;color:#dcdcdc;letter-spacing:1.580px;-webkit-text-stroke:0.45px #dcdcdc;right:402.39px;">0.69%</span>
<span class="t " style="top:1114px;font-size:22px;line-height:22px;color:#dcdcdc;letter-spacing:0.747px;-webkit-text-stroke:0.45px #dcdcdc;left:676.50px;">Last Level Cache Utilization</span>
<span class="t " style="top:1114px;font-size:22px;line-height:22px;color:#dcdcdc;letter-spacing:0.961px;-webkit-text-stroke:0.45px #dcdcdc;right:593.75px;">N/A</span>
<span class="t " style="top:1114px;font-size:22px;line-height:22px;color:#dcdcdc;letter-spacing:1.580px;-webkit-text-stroke:0.45px #dcdcdc;right:402.39px;">0.62%</span>
<span class="t " style="top:1150px;font-size:22px;line-height:22px;color:#dcdcdc;letter-spacing:0.660px;-webkit-text-stroke:0.45px #dcdcdc;left:676.50px;">Partial Render Count</span>
<span class="t " style="top:1150px;font-size:22px;line-height:22px;color:#dcdcdc;letter-spacing:0.961px;-webkit-text-stroke:0.45px #dcdcdc;right:593.75px;">N/A</span>
<span class="t " style="top:1150px;font-size:22px;line-height:22px;color:#dcdcdc;letter-spacing:1.580px;-webkit-text-stroke:0.45px #dcdcdc;right:402.31px;">0</span>
<span class="t " style="top:1186px;font-size:22px;line-height:22px;color:#dcdcdc;letter-spacing:0.637px;-webkit-text-stroke:0.45px #dcdcdc;left:677.30px;">Shaded Vertex Read Limiter</span>
<span class="t " style="top:1186px;font-size:22px;line-height:22px;color:#dcdcdc;letter-spacing:0.961px;-webkit-text-stroke:0.45px #dcdcdc;right:593.75px;">N/A</span>
<span class="t " style="top:1186px;font-size:22px;line-height:22px;color:#dcdcdc;letter-spacing:1.580px;-webkit-text-stroke:0.45px #dcdcdc;right:402.39px;">0.00%</span>
<span class="t " style="top:1222px;font-size:22px;line-height:22px;color:#dcdcdc;letter-spacing:0.852px;-webkit-text-stroke:0.45px #dcdcdc;left:677.18px;">Cull Unit Limiter</span>
<span class="t " style="top:1222px;font-size:22px;line-height:22px;color:#dcdcdc;letter-spacing:0.961px;-webkit-text-stroke:0.45px #dcdcdc;right:593.75px;">N/A</span>
<span class="t " style="top:1222px;font-size:22px;line-height:22px;color:#dcdcdc;letter-spacing:1.580px;-webkit-text-stroke:0.45px #dcdcdc;right:402.39px;">0.00%</span>
<span class="t " style="top:1258px;font-size:22px;line-height:22px;color:#dcdcdc;letter-spacing:0.871px;-webkit-text-stroke:0.45px #dcdcdc;left:677.18px;">Clip Unit Limiter</span>
<span class="t " style="top:1258px;font-size:22px;line-height:22px;color:#dcdcdc;letter-spacing:0.961px;-webkit-text-stroke:0.45px #dcdcdc;right:593.75px;">N/A</span>
<span class="t " style="top:1258px;font-size:22px;line-height:22px;color:#dcdcdc;letter-spacing:1.580px;-webkit-text-stroke:0.45px #dcdcdc;right:402.39px;">0.00%</span>
<span class="t " style="top:1294px;font-size:22px;line-height:22px;color:#dcdcdc;letter-spacing:0.640px;-webkit-text-stroke:0.45px #dcdcdc;left:676.50px;">Register L1 Read Accesses</span>
<span class="t " style="top:1294px;font-size:22px;line-height:22px;color:#dcdcdc;letter-spacing:0.961px;-webkit-text-stroke:0.45px #dcdcdc;right:593.75px;">N/A</span>
<span class="t " style="top:1294px;font-size:22px;line-height:22px;color:#dcdcdc;letter-spacing:1.580px;-webkit-text-stroke:0.45px #dcdcdc;right:402.31px;">0</span>
<span class="t " style="top:1330px;font-size:22px;line-height:22px;color:#dcdcdc;letter-spacing:0.789px;-webkit-text-stroke:0.45px #dcdcdc;left:676.50px;">Register L1 Write Accesses</span>
<span class="t " style="top:1330px;font-size:22px;line-height:22px;color:#dcdcdc;letter-spacing:0.961px;-webkit-text-stroke:0.45px #dcdcdc;right:593.75px;">N/A</span>
<span class="t " style="top:1330px;font-size:22px;line-height:22px;color:#dcdcdc;letter-spacing:1.580px;-webkit-text-stroke:0.45px #dcdcdc;right:402.31px;">0</span>
<span class="t " style="top:1366px;font-size:22px;line-height:22px;color:#dcdcdc;letter-spacing:0.844px;-webkit-text-stroke:0.45px #dcdcdc;left:677.26px;">Other L1 Write Accesses</span>
<span class="t " style="top:1366px;font-size:22px;line-height:22px;color:#dcdcdc;letter-spacing:0.961px;-webkit-text-stroke:0.45px #dcdcdc;right:593.75px;">N/A</span>
<span class="t " style="top:1366px;font-size:22px;line-height:22px;color:#dcdcdc;letter-spacing:1.580px;-webkit-text-stroke:0.45px #dcdcdc;right:402.31px;">0</span>
<span class="t " style="top:1402px;font-size:22px;line-height:22px;color:#dcdcdc;letter-spacing:0.690px;-webkit-text-stroke:0.45px #dcdcdc;left:677.26px;">Other L1 Read Accesses</span>
<span class="t " style="top:1402px;font-size:22px;line-height:22px;color:#dcdcdc;letter-spacing:0.961px;-webkit-text-stroke:0.45px #dcdcdc;right:593.75px;">N/A</span>
<span class="t " style="top:1402px;font-size:22px;line-height:22px;color:#dcdcdc;letter-spacing:1.580px;-webkit-text-stroke:0.45px #dcdcdc;right:402.31px;">0</span>
<span class="t " style="top:1438px;font-size:22px;line-height:22px;color:#dcdcdc;letter-spacing:0.852px;-webkit-text-stroke:0.45px #dcdcdc;left:677.18px;">Control Flow Utilization</span>
<span class="t " style="top:1438px;font-size:22px;line-height:22px;color:#dcdcdc;letter-spacing:0.961px;-webkit-text-stroke:0.45px #dcdcdc;right:593.75px;">N/A</span>
<span class="t " style="top:1438px;font-size:22px;line-height:22px;color:#dcdcdc;letter-spacing:1.580px;-webkit-text-stroke:0.45px #dcdcdc;right:402.39px;">18.08%</span>
<span class="t " style="top:1474px;font-size:22px;line-height:22px;color:#dcdcdc;letter-spacing:0.784px;-webkit-text-stroke:0.45px #dcdcdc;left:677.18px;">Control Flow Limiter</span>
<span class="t " style="top:1474px;font-size:22px;line-height:22px;color:#dcdcdc;letter-spacing:0.961px;-webkit-text-stroke:0.45px #dcdcdc;right:593.75px;">N/A</span>
<span class="t " style="top:1474px;font-size:22px;line-height:22px;color:#dcdcdc;letter-spacing:1.580px;-webkit-text-stroke:0.45px #dcdcdc;right:402.39px;">24.57%</span>
<span class="t " style="top:1510px;font-size:22px;line-height:22px;color:#dcdcdc;letter-spacing:0.796px;-webkit-text-stroke:0.45px #dcdcdc;left:677.18px;">Compute Shader Launch Utilization</span>
<span class="t " style="top:1510px;font-size:22px;line-height:22px;color:#dcdcdc;letter-spacing:0.961px;-webkit-text-stroke:0.45px #dcdcdc;right:593.75px;">N/A</span>
<span class="t " style="top:1510px;font-size:22px;line-height:22px;color:#dcdcdc;letter-spacing:1.580px;-webkit-text-stroke:0.45px #dcdcdc;right:402.39px;">0.00%</span>
<span class="t " style="top:1546px;font-size:22px;line-height:22px;color:#dcdcdc;letter-spacing:0.756px;-webkit-text-stroke:0.45px #dcdcdc;left:677.18px;">Compute Shader Launch Limiter</span>
<span class="t " style="top:1546px;font-size:22px;line-height:22px;color:#dcdcdc;letter-spacing:0.961px;-webkit-text-stroke:0.45px #dcdcdc;right:593.75px;">N/A</span>
<span class="t " style="top:1546px;font-size:22px;line-height:22px;color:#dcdcdc;letter-spacing:1.580px;-webkit-text-stroke:0.45px #dcdcdc;right:402.39px;">0.00%</span>
<span class="t " style="top:1582px;font-size:22px;line-height:22px;color:#dcdcdc;letter-spacing:0.797px;-webkit-text-stroke:0.45px #dcdcdc;left:676.50px;">Fragment Shader Launch Utilization</span>
<span class="t " style="top:1582px;font-size:22px;line-height:22px;color:#dcdcdc;letter-spacing:0.961px;-webkit-text-stroke:0.45px #dcdcdc;right:593.75px;">N/A</span>
<span class="t " style="top:1582px;font-size:22px;line-height:22px;color:#dcdcdc;letter-spacing:1.580px;-webkit-text-stroke:0.45px #dcdcdc;right:402.39px;">0.00%</span>
<span class="t " style="top:1618px;font-size:22px;line-height:22px;color:#dcdcdc;letter-spacing:0.744px;-webkit-text-stroke:0.45px #dcdcdc;left:676.50px;">Fragment Shader Launch Limiter</span>
<span class="t " style="top:1618px;font-size:22px;line-height:22px;color:#dcdcdc;letter-spacing:0.961px;-webkit-text-stroke:0.45px #dcdcdc;right:593.75px;">N/A</span>
<span class="t " style="top:1618px;font-size:22px;line-height:22px;color:#dcdcdc;letter-spacing:1.580px;-webkit-text-stroke:0.45px #dcdcdc;right:402.39px;">0.00%</span>
<span class="t " style="top:1654px;font-size:22px;line-height:22px;color:#dcdcdc;letter-spacing:0.679px;-webkit-text-stroke:0.45px #dcdcdc;left:678.20px;">Vertex Shader Launch Limiter</span>
<span class="t " style="top:1654px;font-size:22px;line-height:22px;color:#dcdcdc;letter-spacing:0.961px;-webkit-text-stroke:0.45px #dcdcdc;right:593.75px;">N/A</span>
<span class="t " style="top:1654px;font-size:22px;line-height:22px;color:#dcdcdc;letter-spacing:1.580px;-webkit-text-stroke:0.45px #dcdcdc;right:402.39px;">0.00%</span>
<span class="t " style="top:1690px;font-size:22px;line-height:22px;color:#dcdcdc;letter-spacing:0.753px;-webkit-text-stroke:0.45px #dcdcdc;left:678.20px;">Vertex Shader Launch Utilization</span>
<span class="t " style="top:1690px;font-size:22px;line-height:22px;color:#dcdcdc;letter-spacing:0.961px;-webkit-text-stroke:0.45px #dcdcdc;right:593.75px;">N/A</span>
<span class="t " style="top:1690px;font-size:22px;line-height:22px;color:#dcdcdc;letter-spacing:1.580px;-webkit-text-stroke:0.45px #dcdcdc;right:402.39px;">0.00%</span>
<div class="b" style="left:626px;top:1774px;width:2372px;height:44px;background:#333;border:1.5px solid #474747;border-radius:10px"></div>
<div class="b" style="left:635px;top:1783.5px;width:52px;height:25.5px;border:2px solid #858585;border-radius:13px"></div>
<svg class="i" style="left:645px;top:1789px;" width="36" height="14" viewBox="0 0 36 14"><g fill="none" stroke="#8f8f8f" stroke-width="1.9" stroke-linecap="round"><path d="M1 2.2 H14 M3.4 7 H11.6 M5.6 11.8 H9.4"/><path d="M24.4 5 L28.2 8.8 L32 5" stroke-width="2.1" stroke-linejoin="round"/></g></svg>
<span class="t " style="top:1787px;font-size:22px;line-height:22px;color:#9a9a9a;letter-spacing:1.017px;-webkit-text-stroke:0.45px #9a9a9a;left:697.20px;">Filter</span>
<svg class="i" style="left:643px;top:1851px;" width="37" height="24" viewBox="0 0 37 24"><path d="M0.6 4.4 a3.6 3.6 0 0 1 3.6 -3.6 H24.4 a3.6 3.6 0 0 1 2.7 1.2 L34.8 10 a3 3 0 0 1 0 4 L27.1 22 a3.6 3.6 0 0 1 -2.7 1.2 H4.2 a3.6 3.6 0 0 1 -3.6 -3.6 Z" fill="#3478f6"/></svg>
<div class="b" style="left:692.3px;top:1850px;width:1.6px;height:24px;background:#3a3a3a"></div>
<svg class="i" style="left:712.5px;top:1849.5px;" width="27" height="26.5" viewBox="0 0 27 26.5"><rect x="0.6" y="0.6" width="5.6" height="25" rx="1.6" fill="#909090"/><path d="M10 2.4 a1.4 1.4 0 0 1 2.1 -1.2 L25.4 12 a1.4 1.4 0 0 1 0 2.4 L12.1 25.2 a1.4 1.4 0 0 1 -2.1 -1.2 Z" fill="#909090"/></svg>
<svg class="i" style="left:768.5px;top:1848.5px;" width="30" height="27" viewBox="0 0 30 27"><g fill="none" stroke="#909090" stroke-width="2.4" stroke-linecap="round"><circle cx="15" cy="16.4" r="7.7"/><path d="M15 11.6 V24" stroke-width="2"/><path d="M10.2 10.2 A5.4 5.4 0 0 1 19.8 10.2"/><path d="M11.4 6.6 C10.8 4.6 9.8 3.2 8.2 2.4 M18.6 6.6 C19.2 4.6 20.2 3.2 21.8 2.4"/><path d="M7.6 13.4 C5.4 13 4 11.6 3.4 9.6 M22.4 13.4 C24.6 13 26 11.6 26.6 9.6 M7.2 17.2 H2.2 M22.8 17.2 H27.8 M8.2 21 C6 21.6 4.6 23 3.8 25.2 M21.8 21 C24 21.6 25.4 23 26.2 25.2"/></g></svg>
<svg class="i" style="left:832px;top:1849px;" width="25" height="27" viewBox="0 0 25 27"><g fill="none" stroke="#5c5c5c" stroke-width="2" stroke-linecap="round" stroke-linejoin="round"><path d="M21.66 12.6 A10 10 0 1 1 12 5.2 H15.8"/><path d="M12.4 1.2 L16.6 5.2 L12.4 9.2"/></g></svg>
<svg class="i" style="left:889px;top:1847px;" width="30" height="30" viewBox="0 0 30 30"><circle cx="15" cy="15" r="15" fill="#3478f6"/><circle cx="5.74" cy="16.63" r="1.45" fill="#1e1e1e"/><circle cx="7.80" cy="8.96" r="1.45" fill="#1e1e1e"/><circle cx="22.20" cy="8.96" r="1.45" fill="#1e1e1e"/><circle cx="24.26" cy="16.63" r="1.45" fill="#1e1e1e"/><circle cx="8.96" cy="22.20" r="1.45" fill="#1e1e1e"/><circle cx="21.04" cy="22.20" r="1.45" fill="#1e1e1e"/><path d="M14.1 4.6 h1.8 l1.5 11.6 a2.4 2.4 0 0 1 -4.8 0 z" fill="#1e1e1e"/></svg>
<svg class="i" style="left:2957px;top:1849.5px;" width="26" height="26" viewBox="0 0 26 26"><rect x="1.2" y="1.2" width="23.6" height="23.6" rx="4.4" fill="none" stroke="#c4c4c4" stroke-width="1.9"/><rect x="4.6" y="16.6" width="16.8" height="5" rx="0.8" fill="#c4c4c4"/></svg>
<div class="b" style="left:659.6px;top:1767px;width:4px;height:1.2px;background:#4c4c4c"></div>
<div class="b" style="left:672px;top:1767px;width:4px;height:1.2px;background:#4c4c4c"></div>
</body></html>
